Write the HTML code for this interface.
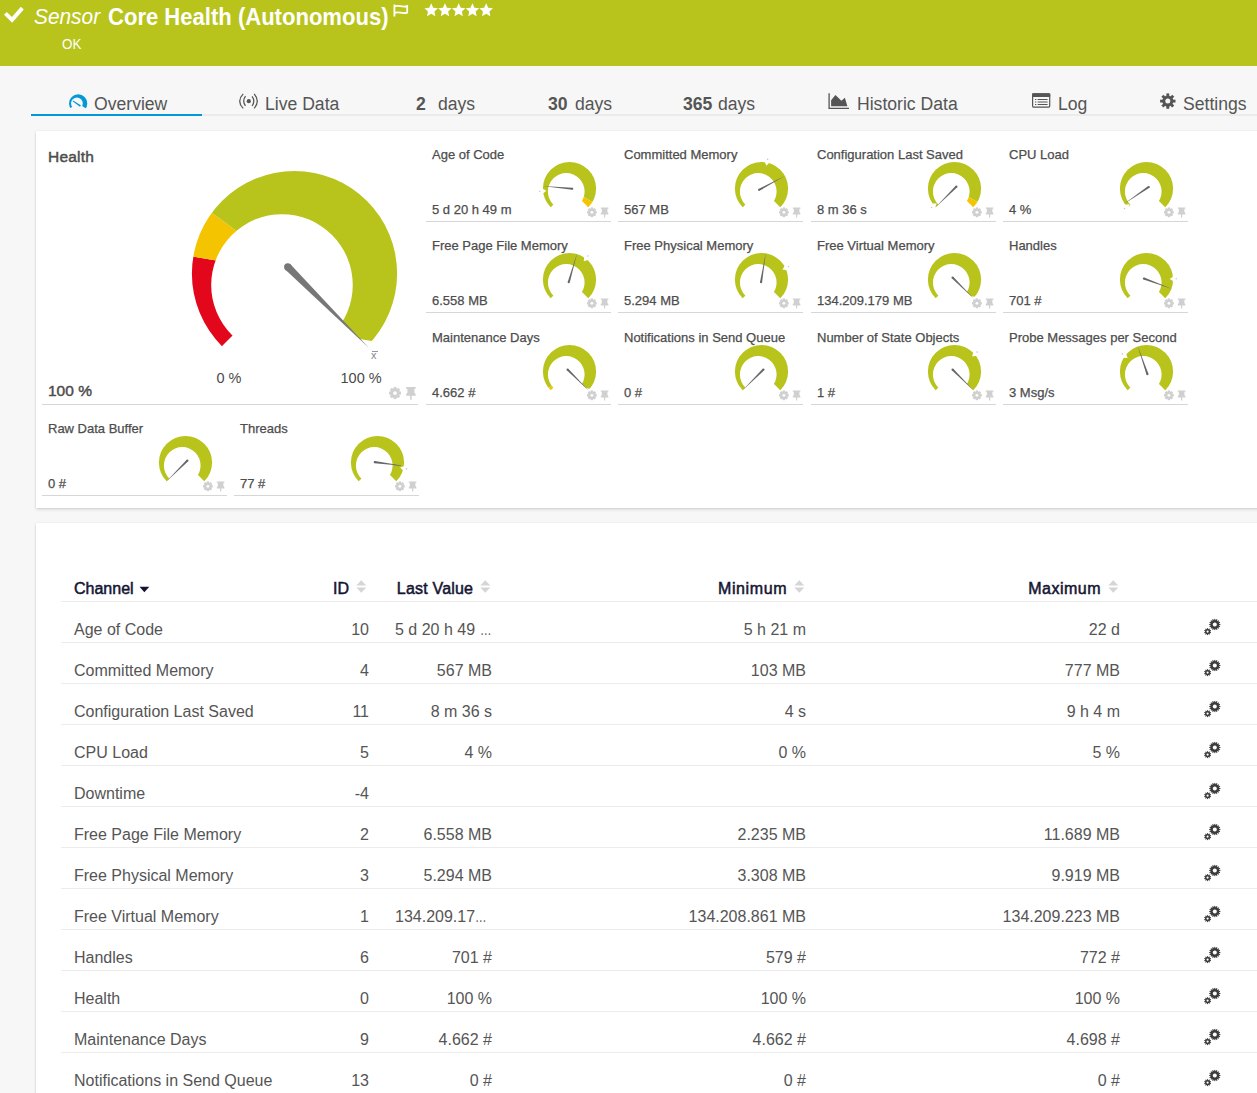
<!DOCTYPE html>
<html><head><meta charset="utf-8">
<style>
*{margin:0;padding:0;box-sizing:border-box}
html,body{width:1257px;height:1093px;overflow:hidden;background:#f7f7f7;font-family:"Liberation Sans",sans-serif;color:#555}
.a{position:absolute;white-space:nowrap;line-height:1}
#hdr{position:absolute;left:0;top:0;width:1257px;height:66px;background:#b8c41c}
.tab{position:absolute;top:95px;font-size:17.6px;line-height:18px;color:#555;white-space:nowrap}
.tab b{font-weight:bold}
.panel{position:absolute;left:36px;width:1240px;background:#fff;box-shadow:0 0 2px rgba(0,0,0,.09),0 1.5px 3px rgba(0,0,0,.13)}
.tt{position:absolute;font-size:13px;line-height:13px;color:#4d4d4d;-webkit-text-stroke:0.25px #4d4d4d;white-space:nowrap}
.tv{position:absolute;font-size:13px;line-height:13px;color:#4d4d4d;-webkit-text-stroke:0.25px #4d4d4d;white-space:nowrap}
.tl{position:absolute;height:1px;background:#d6d6d6}
.th{position:absolute;top:580.7px;font-size:16px;line-height:16px;color:#141433;-webkit-text-stroke:0.5px #141433;white-space:nowrap}
.td{position:absolute;font-size:16px;line-height:16px;color:#555;white-space:nowrap}
.rl{position:absolute;left:61px;width:1196px;height:1px;background:#ececec}
</style></head><body>
<div id="hdr"></div>
<svg class="a" style="left:0;top:0" width="520" height="60" viewBox="0 0 520 60">
 <path d="M5.4,13.3 L12.1,19.9 L22.3,8.1" fill="none" stroke="#fff" stroke-width="3.9" stroke-linecap="butt" stroke-linejoin="miter"/>
 <path d="M394.4,4.6 V16.6 M394.8,6.3 C398.5,4.4 402,8 407.2,6.1 V12.6 C402,14.5 398.5,11 394.8,12.9" fill="none" stroke="#fff" stroke-width="1.8"/>
 <g fill="#fff"><polygon points="431.2,3.3 433.2,7.65 437.95,8.21 434.43,11.45 435.37,16.14 431.2,13.8 427.03,16.14 427.97,11.45 424.45,8.21 429.2,7.65"/><polygon points="444.95,3.3 446.95,7.65 451.7,8.21 448.18,11.45 449.12,16.14 444.95,13.8 440.78,16.14 441.72,11.45 438.2,8.21 442.95,7.65"/><polygon points="458.7,3.3 460.7,7.65 465.45,8.21 461.93,11.45 462.87,16.14 458.7,13.8 454.53,16.14 455.47,11.45 451.95,8.21 456.7,7.65"/><polygon points="472.45,3.3 474.45,7.65 479.2,8.21 475.68,11.45 476.62,16.14 472.45,13.8 468.28,16.14 469.22,11.45 465.7,8.21 470.45,7.65"/><polygon points="486.2,3.3 488.2,7.65 492.95,8.21 489.43,11.45 490.37,16.14 486.2,13.8 482.03,16.14 482.97,11.45 479.45,8.21 484.2,7.65"/></g>
</svg>
<div class="a" style="left:33.6px;top:6.6px;font-size:21.5px;line-height:21.5px;font-style:italic;color:#fff;transform:scaleX(0.97);transform-origin:0 0">Sensor</div>
<div class="a" style="left:107.5px;top:5px;font-size:24.5px;line-height:24.5px;font-weight:bold;color:#fff;transform:scaleX(0.9);transform-origin:0 0">Core Health (Autonomous)</div>
<div class="a" style="left:62px;top:36.6px;font-size:14.1px;line-height:14.1px;color:#fff;transform:scaleX(0.95);transform-origin:0 0">OK</div>

<!-- tabs -->
<div class="tab" style="left:94px">Overview</div>
<div class="tab" style="left:265px">Live Data</div>
<div class="tab" style="left:416px"><b>2</b></div><div class="tab" style="left:438px">days</div>
<div class="tab" style="left:548px"><b>30</b></div><div class="tab" style="left:575px">days</div>
<div class="tab" style="left:683px"><b>365</b></div><div class="tab" style="left:718px">days</div>
<div class="tab" style="left:857px">Historic Data</div>
<div class="tab" style="left:1058px">Log</div>
<div class="tab" style="left:1183px">Settings</div>
<div class="a" style="left:31px;top:114px;width:1226px;height:2px;background:#ebebeb"></div>
<div class="a" style="left:31px;top:114px;width:171px;height:2px;background:#0399d6"></div>
<svg class="a" style="left:0;top:85px" width="1257" height="30" viewBox="0 85 1257 30">
 <!-- overview gauge icon -->
<clipPath id="ovc"><path clip-rule="evenodd" d="M69,103.4a9.15,9.15 0 1,0 18.3,0a9.15,9.15 0 1,0 -18.3,0ZM71,103.3a5.9,5.9 0 1,0 11.8,0a5.9,5.9 0 1,0 -11.8,0Z"/></clipPath><g clip-path="url(#ovc)"><polygon fill="#0399d6" points="78.15,103.4 66.03,110.4 65.47,109.33 65,108.21 64.63,107.05 64.37,105.87 64.21,104.67 64.15,103.46 64.2,102.25 64.35,101.05 64.6,99.86 64.96,98.71 65.42,97.58 65.97,96.5 66.61,95.48 67.34,94.51 68.15,93.61 69.03,92.78 69.98,92.03 71,91.37 72.06,90.79 73.17,90.31 74.32,89.93 75.5,89.65 76.7,89.48 77.91,89.4 79.12,89.43 80.33,89.57 81.51,89.81 82.67,90.15 83.8,90.59 84.89,91.13 85.92,91.76 86.9,92.47 87.81,93.27 88.65,94.14 89.41,95.09 90.09,96.09 90.68,97.15 91.17,98.26 91.57,99.4 91.86,100.58 92.06,101.77 92.14,102.98 92.13,104.19 92.01,105.4 91.78,106.59 91.46,107.75 91.03,108.89 90.51,109.98 89.89,111.02"/></g><polygon fill="#0399d6" points="72.6,101.3 73.2,100.5 80.3,105 79.3,106.3"/><circle cx="79.8" cy="105.6" r="0.85" fill="#0399d6"/>
 <!-- live data -->
 <circle cx="248.8" cy="101.2" r="2.1" fill="#555"/>
 <path d="M243.2,93.9 Q236.2,101.2 243.2,108.4 M245.5,96.2 Q241.9,101 245.5,105.9 M252.1,96.4 Q255.5,101.2 252.1,106 M254.2,94 Q260.4,101.2 254.2,108.3" fill="none" stroke="#555" stroke-width="1.25"/>
 <!-- historic -->
 <path d="M829.1,93.3 V108.3 H849" fill="none" stroke="#555" stroke-width="1.3"/>
 <path d="M831.1,106.2 V100.2 L835.4,94.9 L841.4,100.7 L844.9,97.8 L847.4,106.2 Z" fill="#555"/>
 <!-- log -->
 <rect x="1032.6" y="93.9" width="17.1" height="13.3" rx="1.3" fill="none" stroke="#555" stroke-width="1.2"/>
 <rect x="1032" y="93.3" width="18.3" height="3.6" rx="0.8" fill="#555"/>
 <path d="M1035,99.5 h1.3 M1037.6,99.5 h10 M1035,102 h1.3 M1037.6,102 h10 M1035,104.5 h1.3 M1037.6,104.5 h10" stroke="#555" stroke-width="1"/>
 <!-- settings gear -->
 <circle cx="1167.8" cy="101.1" r="5.54" fill="#555"/><rect x="1166.38" y="93.4" width="2.85" height="2.96" fill="#555" transform="rotate(0.0 1167.8 101.1)"/><rect x="1166.38" y="93.4" width="2.85" height="2.96" fill="#555" transform="rotate(45.0 1167.8 101.1)"/><rect x="1166.38" y="93.4" width="2.85" height="2.96" fill="#555" transform="rotate(90.0 1167.8 101.1)"/><rect x="1166.38" y="93.4" width="2.85" height="2.96" fill="#555" transform="rotate(135.0 1167.8 101.1)"/><rect x="1166.38" y="93.4" width="2.85" height="2.96" fill="#555" transform="rotate(180.0 1167.8 101.1)"/><rect x="1166.38" y="93.4" width="2.85" height="2.96" fill="#555" transform="rotate(225.0 1167.8 101.1)"/><rect x="1166.38" y="93.4" width="2.85" height="2.96" fill="#555" transform="rotate(270.0 1167.8 101.1)"/><rect x="1166.38" y="93.4" width="2.85" height="2.96" fill="#555" transform="rotate(315.0 1167.8 101.1)"/><circle cx="1167.8" cy="101.1" r="2.5" fill="#f7f7f7"/>
</svg>

<div class="panel" style="top:131px;height:377px"></div>
<div class="panel" style="top:523px;height:600px"></div>

<!-- Health tile -->
<div class="a" style="left:48px;top:149px;font-size:15.5px;line-height:15.5px;letter-spacing:0.2px;color:#4d4d4d;-webkit-text-stroke:0.45px #4d4d4d">Health</div>
<div class="a" style="left:48px;top:383px;font-size:15.5px;line-height:15.5px;color:#4d4d4d;-webkit-text-stroke:0.45px #4d4d4d">100 %</div>
<div class="a" style="left:216.5px;top:371px;font-size:14.5px;line-height:14.5px;color:#4a4a4a">0 %</div>
<div class="a" style="left:340.5px;top:371px;font-size:14.5px;line-height:14.5px;color:#4a4a4a">100 %</div>
<div class="a" style="left:371px;top:350px;font-size:11px;line-height:11px;color:#888">x</div>
<div class="a" style="left:371.5px;top:351px;width:6px;height:1px;background:#999"></div>
<div class="tl" style="left:42px;top:404px;width:376px"></div>
<div class="tt" style="left:432px;top:148px">Age of Code</div>
<div class="tv" style="left:432px;top:203px">5 d 20 h 49 m</div>
<div class="tl" style="left:426px;top:221px;width:185px"></div>
<div class="tt" style="left:624px;top:148px">Committed Memory</div>
<div class="tv" style="left:624px;top:203px">567 MB</div>
<div class="tl" style="left:618px;top:221px;width:185px"></div>
<div class="tt" style="left:817px;top:148px">Configuration Last Saved</div>
<div class="tv" style="left:817px;top:203px">8 m 36 s</div>
<div class="tl" style="left:811px;top:221px;width:185px"></div>
<div class="tt" style="left:1009px;top:148px">CPU Load</div>
<div class="tv" style="left:1009px;top:203px">4 %</div>
<div class="tl" style="left:1003px;top:221px;width:185px"></div>
<div class="tt" style="left:432px;top:239px">Free Page File Memory</div>
<div class="tv" style="left:432px;top:294px">6.558 MB</div>
<div class="tl" style="left:426px;top:312px;width:185px"></div>
<div class="tt" style="left:624px;top:239px">Free Physical Memory</div>
<div class="tv" style="left:624px;top:294px">5.294 MB</div>
<div class="tl" style="left:618px;top:312px;width:185px"></div>
<div class="tt" style="left:817px;top:239px">Free Virtual Memory</div>
<div class="tv" style="left:817px;top:294px">134.209.179 MB</div>
<div class="tl" style="left:811px;top:312px;width:185px"></div>
<div class="tt" style="left:1009px;top:239px">Handles</div>
<div class="tv" style="left:1009px;top:294px">701 #</div>
<div class="tl" style="left:1003px;top:312px;width:185px"></div>
<div class="tt" style="left:432px;top:331px">Maintenance Days</div>
<div class="tv" style="left:432px;top:386px">4.662 #</div>
<div class="tl" style="left:426px;top:404px;width:185px"></div>
<div class="tt" style="left:624px;top:331px">Notifications in Send Queue</div>
<div class="tv" style="left:624px;top:386px">0 #</div>
<div class="tl" style="left:618px;top:404px;width:185px"></div>
<div class="tt" style="left:817px;top:331px">Number of State Objects</div>
<div class="tv" style="left:817px;top:386px">1 #</div>
<div class="tl" style="left:811px;top:404px;width:185px"></div>
<div class="tt" style="left:1009px;top:331px">Probe Messages per Second</div>
<div class="tv" style="left:1009px;top:386px">3 Msg/s</div>
<div class="tl" style="left:1003px;top:404px;width:185px"></div>
<div class="tt" style="left:48px;top:422px">Raw Data Buffer</div>
<div class="tv" style="left:48px;top:477px">0 #</div>
<div class="tl" style="left:42px;top:495px;width:185px"></div>
<div class="tt" style="left:240px;top:422px">Threads</div>
<div class="tv" style="left:240px;top:477px">77 #</div>
<div class="tl" style="left:234px;top:495px;width:185px"></div>
<svg class="a" style="left:0;top:0" width="1257" height="520" viewBox="0 0 1257 520">
<clipPath id="r1"><path clip-rule="evenodd" d="M542.9,188.5a26.6,26.6 0 1,0 53.2,0a26.6,26.6 0 1,0 -53.2,0ZM547.9,191.45a18.35,18.35 0 1,0 36.7,0a18.35,18.35 0 1,0 -36.7,0Z"/></clipPath>
<g clip-path="url(#r1)">
<polygon fill="#b8c41c" points="569.5,188.5 539.41,218.59 536.94,215.9 534.71,213.01 532.73,209.94 531.03,206.71 529.61,203.35 528.49,199.87 527.66,196.31 527.15,192.7 526.94,189.05 527.05,185.4 527.47,181.78 528.21,178.2 529.24,174.7 530.57,171.3 532.19,168.02 534.08,164.9 536.23,161.95 538.63,159.2 541.26,156.66 544.09,154.36 547.11,152.31 550.3,150.52 553.62,149.01 557.06,147.8 560.6,146.88 564.2,146.27 567.84,145.97 571.49,145.99 575.13,146.31 578.72,146.95 582.25,147.89 585.68,149.14 589,150.67 592.17,152.48 595.17,154.55 597.99,156.88 600.59,159.44 602.97,162.21 605.1,165.18 606.97,168.31 608.56,171.6 609.87,175.01 610.87,178.52 611.58,182.1 611.97,185.73 612.05,189.38 611.82,193.03 611.27,196.64 610.42,200.19 609.27,203.65 607.83,207.01 606.1,210.22"/>
<polygon fill="#f5c400" points="569.5,188.5 606.1,210.22 604.17,213.19 601.99,215.99 599.59,218.59"/>
</g>
<polygon fill="#fff" points="546.4,190.65 542.59,193.64 542.1,188.41"/>
<circle cx="539.83" cy="191.26" r="0.8" fill="#c8c8d0"/>
<polygon fill="#666" points="572.19,189.8 542.21,186.01 572.38,187.71"/>
<circle cx="572.29" cy="188.75" r="1.05" fill="#666"/>
<circle cx="591.9" cy="212.3" r="3.92" fill="#d0d0d0"/><rect x="590.72" y="207.4" width="2.35" height="1.78" fill="#d0d0d0" transform="rotate(0.0 591.9 212.3)"/><rect x="590.72" y="207.4" width="2.35" height="1.78" fill="#d0d0d0" transform="rotate(45.0 591.9 212.3)"/><rect x="590.72" y="207.4" width="2.35" height="1.78" fill="#d0d0d0" transform="rotate(90.0 591.9 212.3)"/><rect x="590.72" y="207.4" width="2.35" height="1.78" fill="#d0d0d0" transform="rotate(135.0 591.9 212.3)"/><rect x="590.72" y="207.4" width="2.35" height="1.78" fill="#d0d0d0" transform="rotate(180.0 591.9 212.3)"/><rect x="590.72" y="207.4" width="2.35" height="1.78" fill="#d0d0d0" transform="rotate(225.0 591.9 212.3)"/><rect x="590.72" y="207.4" width="2.35" height="1.78" fill="#d0d0d0" transform="rotate(270.0 591.9 212.3)"/><rect x="590.72" y="207.4" width="2.35" height="1.78" fill="#d0d0d0" transform="rotate(315.0 591.9 212.3)"/><circle cx="591.9" cy="212.3" r="1.4" fill="#fff"/>
<path fill="#d0d0d0" transform="translate(600.8 207.4) scale(1.0)" d="M0,0h7.6v1.3h-1v3.3l1,1.2v1.2h-3.2v3.1h-1.2v-3.1h-3.2v-1.2l1,-1.2v-3.3h-1z"/>
<clipPath id="r2"><path clip-rule="evenodd" d="M734.9,188.5a26.6,26.6 0 1,0 53.2,0a26.6,26.6 0 1,0 -53.2,0ZM739.9,191.45a18.35,18.35 0 1,0 36.7,0a18.35,18.35 0 1,0 -36.7,0Z"/></clipPath>
<g clip-path="url(#r2)">
<polygon fill="#b8c41c" points="761.5,188.5 731.41,218.59 728.94,215.91 726.71,213.02 724.74,209.96 723.04,206.73 721.62,203.37 720.5,199.91 719.67,196.36 719.15,192.75 718.94,189.11 719.05,185.46 719.46,181.84 720.19,178.27 721.21,174.77 722.54,171.37 724.15,168.1 726.03,164.98 728.17,162.03 730.56,159.28 733.17,156.74 735.99,154.43 739,152.37 742.18,150.58 745.49,149.06 748.93,147.84 752.45,146.91 756.05,146.29 759.68,145.98 763.32,145.98 766.95,146.29 770.55,146.91 774.07,147.84 777.51,149.06 780.82,150.58 784,152.37 787.01,154.43 789.83,156.74 792.44,159.28 794.83,162.03 796.97,164.98 798.85,168.1 800.46,171.37 801.79,174.77 802.81,178.27 803.54,181.84 803.95,185.46 804.06,189.11 803.85,192.75 803.33,196.36 802.5,199.91 801.38,203.37 799.96,206.73 798.26,209.96 796.29,213.02 794.06,215.91 791.59,218.59"/>
</g>
<polygon fill="#fff" points="766.28,165.8 764.54,161.27 769.68,162.35"/>
<circle cx="767.63" cy="159.34" r="0.8" fill="#c8c8d0"/>
<polygon fill="#666" points="758.54,188.91 785.59,175.45 759.54,190.76"/>
<circle cx="759.04" cy="189.83" r="1.05" fill="#666"/>
<circle cx="783.9" cy="212.3" r="3.92" fill="#d0d0d0"/><rect x="782.72" y="207.4" width="2.35" height="1.78" fill="#d0d0d0" transform="rotate(0.0 783.9 212.3)"/><rect x="782.72" y="207.4" width="2.35" height="1.78" fill="#d0d0d0" transform="rotate(45.0 783.9 212.3)"/><rect x="782.72" y="207.4" width="2.35" height="1.78" fill="#d0d0d0" transform="rotate(90.0 783.9 212.3)"/><rect x="782.72" y="207.4" width="2.35" height="1.78" fill="#d0d0d0" transform="rotate(135.0 783.9 212.3)"/><rect x="782.72" y="207.4" width="2.35" height="1.78" fill="#d0d0d0" transform="rotate(180.0 783.9 212.3)"/><rect x="782.72" y="207.4" width="2.35" height="1.78" fill="#d0d0d0" transform="rotate(225.0 783.9 212.3)"/><rect x="782.72" y="207.4" width="2.35" height="1.78" fill="#d0d0d0" transform="rotate(270.0 783.9 212.3)"/><rect x="782.72" y="207.4" width="2.35" height="1.78" fill="#d0d0d0" transform="rotate(315.0 783.9 212.3)"/><circle cx="783.9" cy="212.3" r="1.4" fill="#fff"/>
<path fill="#d0d0d0" transform="translate(792.8 207.4) scale(1.0)" d="M0,0h7.6v1.3h-1v3.3l1,1.2v1.2h-3.2v3.1h-1.2v-3.1h-3.2v-1.2l1,-1.2v-3.3h-1z"/>
<clipPath id="r3"><path clip-rule="evenodd" d="M927.9,188.5a26.6,26.6 0 1,0 53.2,0a26.6,26.6 0 1,0 -53.2,0ZM932.9,191.45a18.35,18.35 0 1,0 36.7,0a18.35,18.35 0 1,0 -36.7,0Z"/></clipPath>
<g clip-path="url(#r3)">
<polygon fill="#b8c41c" points="954.5,188.5 924.41,218.59 921.94,215.9 919.71,213.01 917.73,209.94 916.03,206.71 914.61,203.35 913.49,199.87 912.66,196.31 912.15,192.7 911.94,189.05 912.05,185.4 912.47,181.78 913.21,178.2 914.24,174.7 915.57,171.3 917.19,168.02 919.08,164.9 921.23,161.95 923.63,159.2 926.26,156.66 929.09,154.36 932.11,152.31 935.3,150.52 938.62,149.01 942.06,147.8 945.6,146.88 949.2,146.27 952.84,145.97 956.49,145.99 960.13,146.31 963.72,146.95 967.25,147.89 970.68,149.14 974,150.67 977.17,152.48 980.17,154.55 982.99,156.88 985.59,159.44 987.97,162.21 990.1,165.18 991.97,168.31 993.56,171.6 994.87,175.01 995.87,178.52 996.58,182.1 996.97,185.73 997.05,189.38 996.82,193.03 996.27,196.64 995.42,200.19 994.27,203.65 992.83,207.01 991.1,210.22"/>
<polygon fill="#f5c400" points="954.5,188.5 991.1,210.22 989.17,213.19 986.99,215.99 984.59,218.59"/>
</g>
<polygon fill="#fff" points="936.62,203.29 935.16,207.91 931.81,203.86"/>
<circle cx="931.54" cy="207.5" r="0.8" fill="#c8c8d0"/>
<polygon fill="#666" points="957.22,187.26 935.13,207.87 955.74,185.78"/>
<circle cx="956.48" cy="186.52" r="1.05" fill="#666"/>
<circle cx="976.9" cy="212.3" r="3.92" fill="#d0d0d0"/><rect x="975.72" y="207.4" width="2.35" height="1.78" fill="#d0d0d0" transform="rotate(0.0 976.9 212.3)"/><rect x="975.72" y="207.4" width="2.35" height="1.78" fill="#d0d0d0" transform="rotate(45.0 976.9 212.3)"/><rect x="975.72" y="207.4" width="2.35" height="1.78" fill="#d0d0d0" transform="rotate(90.0 976.9 212.3)"/><rect x="975.72" y="207.4" width="2.35" height="1.78" fill="#d0d0d0" transform="rotate(135.0 976.9 212.3)"/><rect x="975.72" y="207.4" width="2.35" height="1.78" fill="#d0d0d0" transform="rotate(180.0 976.9 212.3)"/><rect x="975.72" y="207.4" width="2.35" height="1.78" fill="#d0d0d0" transform="rotate(225.0 976.9 212.3)"/><rect x="975.72" y="207.4" width="2.35" height="1.78" fill="#d0d0d0" transform="rotate(270.0 976.9 212.3)"/><rect x="975.72" y="207.4" width="2.35" height="1.78" fill="#d0d0d0" transform="rotate(315.0 976.9 212.3)"/><circle cx="976.9" cy="212.3" r="1.4" fill="#fff"/>
<path fill="#d0d0d0" transform="translate(985.8 207.4) scale(1.0)" d="M0,0h7.6v1.3h-1v3.3l1,1.2v1.2h-3.2v3.1h-1.2v-3.1h-3.2v-1.2l1,-1.2v-3.3h-1z"/>
<clipPath id="r4"><path clip-rule="evenodd" d="M1119.9,188.5a26.6,26.6 0 1,0 53.2,0a26.6,26.6 0 1,0 -53.2,0ZM1124.9,191.45a18.35,18.35 0 1,0 36.7,0a18.35,18.35 0 1,0 -36.7,0Z"/></clipPath>
<g clip-path="url(#r4)">
<polygon fill="#b8c41c" points="1146.5,188.5 1116.41,218.59 1113.94,215.91 1111.71,213.02 1109.74,209.96 1108.04,206.73 1106.62,203.37 1105.5,199.91 1104.67,196.36 1104.15,192.75 1103.94,189.11 1104.05,185.46 1104.46,181.84 1105.19,178.27 1106.21,174.77 1107.54,171.37 1109.15,168.1 1111.03,164.98 1113.17,162.03 1115.56,159.28 1118.17,156.74 1120.99,154.43 1124,152.37 1127.18,150.58 1130.49,149.06 1133.93,147.84 1137.45,146.91 1141.05,146.29 1144.68,145.98 1148.32,145.98 1151.95,146.29 1155.55,146.91 1159.07,147.84 1162.51,149.06 1165.82,150.58 1169,152.37 1172.01,154.43 1174.83,156.74 1177.44,159.28 1179.83,162.03 1181.97,164.98 1183.85,168.1 1185.46,171.37 1186.79,174.77 1187.81,178.27 1188.54,181.84 1188.95,185.46 1189.06,189.11 1188.85,192.75 1188.33,196.36 1187.5,199.91 1186.38,203.37 1184.96,206.73 1183.26,209.96 1181.29,213.02 1179.06,215.91 1176.59,218.59"/>
</g>
<polygon fill="#fff" points="1129.34,204.11 1128.09,208.8 1124.56,204.91"/>
<circle cx="1124.46" cy="208.56" r="0.8" fill="#c8c8d0"/>
<polygon fill="#666" points="1149.41,187.79 1123.84,203.9 1148.23,186.06"/>
<circle cx="1148.82" cy="186.93" r="1.05" fill="#666"/>
<circle cx="1168.9" cy="212.3" r="3.92" fill="#d0d0d0"/><rect x="1167.72" y="207.4" width="2.35" height="1.78" fill="#d0d0d0" transform="rotate(0.0 1168.9 212.3)"/><rect x="1167.72" y="207.4" width="2.35" height="1.78" fill="#d0d0d0" transform="rotate(45.0 1168.9 212.3)"/><rect x="1167.72" y="207.4" width="2.35" height="1.78" fill="#d0d0d0" transform="rotate(90.0 1168.9 212.3)"/><rect x="1167.72" y="207.4" width="2.35" height="1.78" fill="#d0d0d0" transform="rotate(135.0 1168.9 212.3)"/><rect x="1167.72" y="207.4" width="2.35" height="1.78" fill="#d0d0d0" transform="rotate(180.0 1168.9 212.3)"/><rect x="1167.72" y="207.4" width="2.35" height="1.78" fill="#d0d0d0" transform="rotate(225.0 1168.9 212.3)"/><rect x="1167.72" y="207.4" width="2.35" height="1.78" fill="#d0d0d0" transform="rotate(270.0 1168.9 212.3)"/><rect x="1167.72" y="207.4" width="2.35" height="1.78" fill="#d0d0d0" transform="rotate(315.0 1168.9 212.3)"/><circle cx="1168.9" cy="212.3" r="1.4" fill="#fff"/>
<path fill="#d0d0d0" transform="translate(1177.8 207.4) scale(1.0)" d="M0,0h7.6v1.3h-1v3.3l1,1.2v1.2h-3.2v3.1h-1.2v-3.1h-3.2v-1.2l1,-1.2v-3.3h-1z"/>
<clipPath id="r5"><path clip-rule="evenodd" d="M542.9,279.5a26.6,26.6 0 1,0 53.2,0a26.6,26.6 0 1,0 -53.2,0ZM547.9,282.45a18.35,18.35 0 1,0 36.7,0a18.35,18.35 0 1,0 -36.7,0Z"/></clipPath>
<g clip-path="url(#r5)">
<polygon fill="#b8c41c" points="569.5,279.5 539.41,309.59 536.94,306.91 534.71,304.02 532.74,300.96 531.04,297.73 529.62,294.37 528.5,290.91 527.67,287.36 527.15,283.75 526.94,280.11 527.05,276.46 527.46,272.84 528.19,269.27 529.21,265.77 530.54,262.37 532.15,259.1 534.03,255.98 536.17,253.03 538.56,250.28 541.17,247.74 543.99,245.43 547,243.37 550.18,241.58 553.49,240.06 556.93,238.84 560.45,237.91 564.05,237.29 567.68,236.98 571.32,236.98 574.95,237.29 578.55,237.91 582.07,238.84 585.51,240.06 588.82,241.58 592,243.37 595.01,245.43 597.83,247.74 600.44,250.28 602.83,253.03 604.97,255.98 606.85,259.1 608.46,262.37 609.79,265.77 610.81,269.27 611.54,272.84 611.95,276.46 612.06,280.11 611.85,283.75 611.33,287.36 610.5,290.91 609.38,294.37 607.96,297.73 606.26,300.96 604.29,304.02 602.06,306.91 599.59,309.59"/>
</g>
<polygon fill="#fff" points="583.81,261.24 584.25,256.41 588.39,259.65"/>
<circle cx="587.88" cy="256.04" r="0.8" fill="#c8c8d0"/>
<polygon fill="#666" points="567.71,281.9 577.14,253.19 569.73,282.48"/>
<circle cx="568.72" cy="282.19" r="1.05" fill="#666"/>
<circle cx="591.9" cy="303.3" r="3.92" fill="#d0d0d0"/><rect x="590.72" y="298.4" width="2.35" height="1.78" fill="#d0d0d0" transform="rotate(0.0 591.9 303.3)"/><rect x="590.72" y="298.4" width="2.35" height="1.78" fill="#d0d0d0" transform="rotate(45.0 591.9 303.3)"/><rect x="590.72" y="298.4" width="2.35" height="1.78" fill="#d0d0d0" transform="rotate(90.0 591.9 303.3)"/><rect x="590.72" y="298.4" width="2.35" height="1.78" fill="#d0d0d0" transform="rotate(135.0 591.9 303.3)"/><rect x="590.72" y="298.4" width="2.35" height="1.78" fill="#d0d0d0" transform="rotate(180.0 591.9 303.3)"/><rect x="590.72" y="298.4" width="2.35" height="1.78" fill="#d0d0d0" transform="rotate(225.0 591.9 303.3)"/><rect x="590.72" y="298.4" width="2.35" height="1.78" fill="#d0d0d0" transform="rotate(270.0 591.9 303.3)"/><rect x="590.72" y="298.4" width="2.35" height="1.78" fill="#d0d0d0" transform="rotate(315.0 591.9 303.3)"/><circle cx="591.9" cy="303.3" r="1.4" fill="#fff"/>
<path fill="#d0d0d0" transform="translate(600.8 298.4) scale(1.0)" d="M0,0h7.6v1.3h-1v3.3l1,1.2v1.2h-3.2v3.1h-1.2v-3.1h-3.2v-1.2l1,-1.2v-3.3h-1z"/>
<clipPath id="r6"><path clip-rule="evenodd" d="M734.9,279.5a26.6,26.6 0 1,0 53.2,0a26.6,26.6 0 1,0 -53.2,0ZM739.9,282.45a18.35,18.35 0 1,0 36.7,0a18.35,18.35 0 1,0 -36.7,0Z"/></clipPath>
<g clip-path="url(#r6)">
<polygon fill="#b8c41c" points="761.5,279.5 731.41,309.59 728.94,306.91 726.71,304.02 724.74,300.96 723.04,297.73 721.62,294.37 720.5,290.91 719.67,287.36 719.15,283.75 718.94,280.11 719.05,276.46 719.46,272.84 720.19,269.27 721.21,265.77 722.54,262.37 724.15,259.1 726.03,255.98 728.17,253.03 730.56,250.28 733.17,247.74 735.99,245.43 739,243.37 742.18,241.58 745.49,240.06 748.93,238.84 752.45,237.91 756.05,237.29 759.68,236.98 763.32,236.98 766.95,237.29 770.55,237.91 774.07,238.84 777.51,240.06 780.82,241.58 784,243.37 787.01,245.43 789.83,247.74 792.44,250.28 794.83,253.03 796.97,255.98 798.85,259.1 800.46,262.37 801.79,265.77 802.81,269.27 803.54,272.84 803.95,276.46 804.06,280.11 803.85,283.75 803.33,287.36 802.5,290.91 801.38,294.37 799.96,297.73 798.26,300.96 796.29,304.02 794.06,306.91 791.59,309.59"/>
</g>
<polygon fill="#fff" points="782.45,269.52 784.99,265.4 787.25,270.14"/>
<circle cx="788.4" cy="266.68" r="0.8" fill="#c8c8d0"/>
<polygon fill="#666" points="760.02,282.1 765.87,252.45 762.09,282.43"/>
<circle cx="761.05" cy="282.26" r="1.05" fill="#666"/>
<circle cx="783.9" cy="303.3" r="3.92" fill="#d0d0d0"/><rect x="782.72" y="298.4" width="2.35" height="1.78" fill="#d0d0d0" transform="rotate(0.0 783.9 303.3)"/><rect x="782.72" y="298.4" width="2.35" height="1.78" fill="#d0d0d0" transform="rotate(45.0 783.9 303.3)"/><rect x="782.72" y="298.4" width="2.35" height="1.78" fill="#d0d0d0" transform="rotate(90.0 783.9 303.3)"/><rect x="782.72" y="298.4" width="2.35" height="1.78" fill="#d0d0d0" transform="rotate(135.0 783.9 303.3)"/><rect x="782.72" y="298.4" width="2.35" height="1.78" fill="#d0d0d0" transform="rotate(180.0 783.9 303.3)"/><rect x="782.72" y="298.4" width="2.35" height="1.78" fill="#d0d0d0" transform="rotate(225.0 783.9 303.3)"/><rect x="782.72" y="298.4" width="2.35" height="1.78" fill="#d0d0d0" transform="rotate(270.0 783.9 303.3)"/><rect x="782.72" y="298.4" width="2.35" height="1.78" fill="#d0d0d0" transform="rotate(315.0 783.9 303.3)"/><circle cx="783.9" cy="303.3" r="1.4" fill="#fff"/>
<path fill="#d0d0d0" transform="translate(792.8 298.4) scale(1.0)" d="M0,0h7.6v1.3h-1v3.3l1,1.2v1.2h-3.2v3.1h-1.2v-3.1h-3.2v-1.2l1,-1.2v-3.3h-1z"/>
<clipPath id="r7"><path clip-rule="evenodd" d="M927.9,279.5a26.6,26.6 0 1,0 53.2,0a26.6,26.6 0 1,0 -53.2,0ZM932.9,282.45a18.35,18.35 0 1,0 36.7,0a18.35,18.35 0 1,0 -36.7,0Z"/></clipPath>
<g clip-path="url(#r7)">
<polygon fill="#b8c41c" points="954.5,279.5 924.41,309.59 921.94,306.91 919.71,304.02 917.74,300.96 916.04,297.73 914.62,294.37 913.5,290.91 912.67,287.36 912.15,283.75 911.94,280.11 912.05,276.46 912.46,272.84 913.19,269.27 914.21,265.77 915.54,262.37 917.15,259.1 919.03,255.98 921.17,253.03 923.56,250.28 926.17,247.74 928.99,245.43 932,243.37 935.18,241.58 938.49,240.06 941.93,238.84 945.45,237.91 949.05,237.29 952.68,236.98 956.32,236.98 959.95,237.29 963.55,237.91 967.07,238.84 970.51,240.06 973.82,241.58 977,243.37 980.01,245.43 982.83,247.74 985.44,250.28 987.83,253.03 989.97,255.98 991.85,259.1 993.46,262.37 994.79,265.77 995.81,269.27 996.54,272.84 996.95,276.46 997.06,280.11 996.85,283.75 996.33,287.36 995.5,290.91 994.38,294.37 992.96,297.73 991.26,300.96 989.29,304.02 987.06,306.91 984.59,309.59"/>
</g>
<polygon fill="#fff" points="970.9,295.9 975.64,296.93 971.93,300.64"/>
<circle cx="975.57" cy="300.57" r="0.8" fill="#c8c8d0"/>
<polygon fill="#666" points="953.26,276.78 973.87,298.87 951.78,278.26"/>
<circle cx="952.52" cy="277.52" r="1.05" fill="#666"/>
<circle cx="976.9" cy="303.3" r="3.92" fill="#d0d0d0"/><rect x="975.72" y="298.4" width="2.35" height="1.78" fill="#d0d0d0" transform="rotate(0.0 976.9 303.3)"/><rect x="975.72" y="298.4" width="2.35" height="1.78" fill="#d0d0d0" transform="rotate(45.0 976.9 303.3)"/><rect x="975.72" y="298.4" width="2.35" height="1.78" fill="#d0d0d0" transform="rotate(90.0 976.9 303.3)"/><rect x="975.72" y="298.4" width="2.35" height="1.78" fill="#d0d0d0" transform="rotate(135.0 976.9 303.3)"/><rect x="975.72" y="298.4" width="2.35" height="1.78" fill="#d0d0d0" transform="rotate(180.0 976.9 303.3)"/><rect x="975.72" y="298.4" width="2.35" height="1.78" fill="#d0d0d0" transform="rotate(225.0 976.9 303.3)"/><rect x="975.72" y="298.4" width="2.35" height="1.78" fill="#d0d0d0" transform="rotate(270.0 976.9 303.3)"/><rect x="975.72" y="298.4" width="2.35" height="1.78" fill="#d0d0d0" transform="rotate(315.0 976.9 303.3)"/><circle cx="976.9" cy="303.3" r="1.4" fill="#fff"/>
<path fill="#d0d0d0" transform="translate(985.8 298.4) scale(1.0)" d="M0,0h7.6v1.3h-1v3.3l1,1.2v1.2h-3.2v3.1h-1.2v-3.1h-3.2v-1.2l1,-1.2v-3.3h-1z"/>
<clipPath id="r8"><path clip-rule="evenodd" d="M1119.9,279.5a26.6,26.6 0 1,0 53.2,0a26.6,26.6 0 1,0 -53.2,0ZM1124.9,282.45a18.35,18.35 0 1,0 36.7,0a18.35,18.35 0 1,0 -36.7,0Z"/></clipPath>
<g clip-path="url(#r8)">
<polygon fill="#b8c41c" points="1146.5,279.5 1116.41,309.59 1113.94,306.91 1111.71,304.02 1109.74,300.96 1108.04,297.73 1106.62,294.37 1105.5,290.91 1104.67,287.36 1104.15,283.75 1103.94,280.11 1104.05,276.46 1104.46,272.84 1105.19,269.27 1106.21,265.77 1107.54,262.37 1109.15,259.1 1111.03,255.98 1113.17,253.03 1115.56,250.28 1118.17,247.74 1120.99,245.43 1124,243.37 1127.18,241.58 1130.49,240.06 1133.93,238.84 1137.45,237.91 1141.05,237.29 1144.68,236.98 1148.32,236.98 1151.95,237.29 1155.55,237.91 1159.07,238.84 1162.51,240.06 1165.82,241.58 1169,243.37 1172.01,245.43 1174.83,247.74 1177.44,250.28 1179.83,253.03 1181.97,255.98 1183.85,259.1 1185.46,262.37 1186.79,265.77 1187.81,269.27 1188.54,272.84 1188.95,276.46 1189.06,280.11 1188.85,283.75 1188.33,287.36 1187.5,290.91 1186.38,294.37 1184.96,297.73 1183.26,300.96 1181.29,304.02 1179.06,306.91 1176.59,309.59"/>
</g>
<polygon fill="#fff" points="1169.69,278.92 1173.7,276.19 1173.83,281.44"/>
<circle cx="1176.29" cy="278.75" r="0.8" fill="#c8c8d0"/>
<polygon fill="#666" points="1144.23,277.55 1172.22,288.94 1143.51,279.52"/>
<circle cx="1143.87" cy="278.53" r="1.05" fill="#666"/>
<circle cx="1168.9" cy="303.3" r="3.92" fill="#d0d0d0"/><rect x="1167.72" y="298.4" width="2.35" height="1.78" fill="#d0d0d0" transform="rotate(0.0 1168.9 303.3)"/><rect x="1167.72" y="298.4" width="2.35" height="1.78" fill="#d0d0d0" transform="rotate(45.0 1168.9 303.3)"/><rect x="1167.72" y="298.4" width="2.35" height="1.78" fill="#d0d0d0" transform="rotate(90.0 1168.9 303.3)"/><rect x="1167.72" y="298.4" width="2.35" height="1.78" fill="#d0d0d0" transform="rotate(135.0 1168.9 303.3)"/><rect x="1167.72" y="298.4" width="2.35" height="1.78" fill="#d0d0d0" transform="rotate(180.0 1168.9 303.3)"/><rect x="1167.72" y="298.4" width="2.35" height="1.78" fill="#d0d0d0" transform="rotate(225.0 1168.9 303.3)"/><rect x="1167.72" y="298.4" width="2.35" height="1.78" fill="#d0d0d0" transform="rotate(270.0 1168.9 303.3)"/><rect x="1167.72" y="298.4" width="2.35" height="1.78" fill="#d0d0d0" transform="rotate(315.0 1168.9 303.3)"/><circle cx="1168.9" cy="303.3" r="1.4" fill="#fff"/>
<path fill="#d0d0d0" transform="translate(1177.8 298.4) scale(1.0)" d="M0,0h7.6v1.3h-1v3.3l1,1.2v1.2h-3.2v3.1h-1.2v-3.1h-3.2v-1.2l1,-1.2v-3.3h-1z"/>
<clipPath id="r9"><path clip-rule="evenodd" d="M542.9,371.5a26.6,26.6 0 1,0 53.2,0a26.6,26.6 0 1,0 -53.2,0ZM547.9,374.45a18.35,18.35 0 1,0 36.7,0a18.35,18.35 0 1,0 -36.7,0Z"/></clipPath>
<g clip-path="url(#r9)">
<polygon fill="#f5c400" points="569.5,371.5 539.41,401.59 537.69,399.77 536.08,397.85"/>
<polygon fill="#b8c41c" points="569.5,371.5 536.08,397.85 533.92,394.86 532.03,391.69 530.43,388.37 529.11,384.92 528.1,381.37 527.4,377.75 527.02,374.08 526.95,370.4 527.21,366.72 527.78,363.07 528.67,359.49 529.86,356 531.35,352.63 533.13,349.4 535.18,346.33 537.49,343.45 540.04,340.79 542.81,338.35 545.78,336.17 548.92,334.24 552.23,332.6 555.66,331.25 559.2,330.21 562.81,329.47 566.48,329.05 570.16,328.95 573.84,329.16 577.49,329.7 581.08,330.55 584.59,331.7 587.97,333.16 591.22,334.9 594.31,336.92 597.21,339.2 599.91,341.72 602.37,344.46 604.59,347.41 606.54,350.54 608.22,353.83 609.6,357.24 610.68,360.77 611.46,364.38 611.92,368.04 612.06,371.72 611.88,375.4 611.38,379.06 610.57,382.66 609.45,386.17 608.03,389.58 606.32,392.84 604.33,395.95 602.09,398.88 599.59,401.59"/>
</g>
<polygon fill="#fff" points="585.9,387.9 590.64,388.93 586.93,392.64"/>
<circle cx="590.57" cy="392.57" r="0.8" fill="#c8c8d0"/>
<polygon fill="#666" points="568.26,368.78 588.87,390.87 566.78,370.26"/>
<circle cx="567.52" cy="369.52" r="1.05" fill="#666"/>
<circle cx="591.9" cy="395.3" r="3.92" fill="#d0d0d0"/><rect x="590.72" y="390.4" width="2.35" height="1.78" fill="#d0d0d0" transform="rotate(0.0 591.9 395.3)"/><rect x="590.72" y="390.4" width="2.35" height="1.78" fill="#d0d0d0" transform="rotate(45.0 591.9 395.3)"/><rect x="590.72" y="390.4" width="2.35" height="1.78" fill="#d0d0d0" transform="rotate(90.0 591.9 395.3)"/><rect x="590.72" y="390.4" width="2.35" height="1.78" fill="#d0d0d0" transform="rotate(135.0 591.9 395.3)"/><rect x="590.72" y="390.4" width="2.35" height="1.78" fill="#d0d0d0" transform="rotate(180.0 591.9 395.3)"/><rect x="590.72" y="390.4" width="2.35" height="1.78" fill="#d0d0d0" transform="rotate(225.0 591.9 395.3)"/><rect x="590.72" y="390.4" width="2.35" height="1.78" fill="#d0d0d0" transform="rotate(270.0 591.9 395.3)"/><rect x="590.72" y="390.4" width="2.35" height="1.78" fill="#d0d0d0" transform="rotate(315.0 591.9 395.3)"/><circle cx="591.9" cy="395.3" r="1.4" fill="#fff"/>
<path fill="#d0d0d0" transform="translate(600.8 390.4) scale(1.0)" d="M0,0h7.6v1.3h-1v3.3l1,1.2v1.2h-3.2v3.1h-1.2v-3.1h-3.2v-1.2l1,-1.2v-3.3h-1z"/>
<clipPath id="r10"><path clip-rule="evenodd" d="M734.9,371.5a26.6,26.6 0 1,0 53.2,0a26.6,26.6 0 1,0 -53.2,0ZM739.9,374.45a18.35,18.35 0 1,0 36.7,0a18.35,18.35 0 1,0 -36.7,0Z"/></clipPath>
<g clip-path="url(#r10)">
<polygon fill="#b8c41c" points="761.5,371.5 731.41,401.59 728.94,398.91 726.71,396.02 724.74,392.96 723.04,389.73 721.62,386.37 720.5,382.91 719.67,379.36 719.15,375.75 718.94,372.11 719.05,368.46 719.46,364.84 720.19,361.27 721.21,357.77 722.54,354.37 724.15,351.1 726.03,347.98 728.17,345.03 730.56,342.28 733.17,339.74 735.99,337.43 739,335.37 742.18,333.58 745.49,332.06 748.93,330.84 752.45,329.91 756.05,329.29 759.68,328.98 763.32,328.98 766.95,329.29 770.55,329.91 774.07,330.84 777.51,332.06 780.82,333.58 784,335.37 787.01,337.43 789.83,339.74 792.44,342.28 794.83,345.03 796.97,347.98 798.85,351.1 800.46,354.37 801.79,357.77 802.81,361.27 803.54,364.84 803.95,368.46 804.06,372.11 803.85,375.75 803.33,379.36 802.5,382.91 801.38,386.37 799.96,389.73 798.26,392.96 796.29,396.02 794.06,398.91 791.59,401.59"/>
</g>
<polygon fill="#666" points="764.22,370.26 742.13,390.87 762.74,368.78"/>
<circle cx="763.48" cy="369.52" r="1.05" fill="#666"/>
<circle cx="783.9" cy="395.3" r="3.92" fill="#d0d0d0"/><rect x="782.72" y="390.4" width="2.35" height="1.78" fill="#d0d0d0" transform="rotate(0.0 783.9 395.3)"/><rect x="782.72" y="390.4" width="2.35" height="1.78" fill="#d0d0d0" transform="rotate(45.0 783.9 395.3)"/><rect x="782.72" y="390.4" width="2.35" height="1.78" fill="#d0d0d0" transform="rotate(90.0 783.9 395.3)"/><rect x="782.72" y="390.4" width="2.35" height="1.78" fill="#d0d0d0" transform="rotate(135.0 783.9 395.3)"/><rect x="782.72" y="390.4" width="2.35" height="1.78" fill="#d0d0d0" transform="rotate(180.0 783.9 395.3)"/><rect x="782.72" y="390.4" width="2.35" height="1.78" fill="#d0d0d0" transform="rotate(225.0 783.9 395.3)"/><rect x="782.72" y="390.4" width="2.35" height="1.78" fill="#d0d0d0" transform="rotate(270.0 783.9 395.3)"/><rect x="782.72" y="390.4" width="2.35" height="1.78" fill="#d0d0d0" transform="rotate(315.0 783.9 395.3)"/><circle cx="783.9" cy="395.3" r="1.4" fill="#fff"/>
<path fill="#d0d0d0" transform="translate(792.8 390.4) scale(1.0)" d="M0,0h7.6v1.3h-1v3.3l1,1.2v1.2h-3.2v3.1h-1.2v-3.1h-3.2v-1.2l1,-1.2v-3.3h-1z"/>
<clipPath id="r11"><path clip-rule="evenodd" d="M927.9,371.5a26.6,26.6 0 1,0 53.2,0a26.6,26.6 0 1,0 -53.2,0ZM932.9,374.45a18.35,18.35 0 1,0 36.7,0a18.35,18.35 0 1,0 -36.7,0Z"/></clipPath>
<g clip-path="url(#r11)">
<polygon fill="#b8c41c" points="954.5,371.5 924.41,401.59 921.94,398.91 919.71,396.02 917.74,392.96 916.04,389.73 914.62,386.37 913.5,382.91 912.67,379.36 912.15,375.75 911.94,372.11 912.05,368.46 912.46,364.84 913.19,361.27 914.21,357.77 915.54,354.37 917.15,351.1 919.03,347.98 921.17,345.03 923.56,342.28 926.17,339.74 928.99,337.43 932,335.37 935.18,333.58 938.49,332.06 941.93,330.84 945.45,329.91 949.05,329.29 952.68,328.98 956.32,328.98 959.95,329.29 963.55,329.91 967.07,330.84 970.51,332.06 973.82,333.58 977,335.37 980.01,337.43 982.83,339.74 985.44,342.28 987.83,345.03 989.97,347.98 991.85,351.1 993.46,354.37 994.79,357.77 995.81,361.27 996.54,364.84 996.95,368.46 997.06,372.11 996.85,375.75 996.33,379.36 995.5,382.91 994.38,386.37 992.96,389.73 991.26,392.96 989.29,396.02 987.06,398.91 984.59,401.59"/>
</g>
<polygon fill="#fff" points="972.12,356.41 973.5,351.76 976.92,355.75"/>
<circle cx="977.13" cy="352.11" r="0.8" fill="#c8c8d0"/>
<polygon fill="#666" points="953.26,368.78 973.87,390.87 951.78,370.26"/>
<circle cx="952.52" cy="369.52" r="1.05" fill="#666"/>
<circle cx="976.9" cy="395.3" r="3.92" fill="#d0d0d0"/><rect x="975.72" y="390.4" width="2.35" height="1.78" fill="#d0d0d0" transform="rotate(0.0 976.9 395.3)"/><rect x="975.72" y="390.4" width="2.35" height="1.78" fill="#d0d0d0" transform="rotate(45.0 976.9 395.3)"/><rect x="975.72" y="390.4" width="2.35" height="1.78" fill="#d0d0d0" transform="rotate(90.0 976.9 395.3)"/><rect x="975.72" y="390.4" width="2.35" height="1.78" fill="#d0d0d0" transform="rotate(135.0 976.9 395.3)"/><rect x="975.72" y="390.4" width="2.35" height="1.78" fill="#d0d0d0" transform="rotate(180.0 976.9 395.3)"/><rect x="975.72" y="390.4" width="2.35" height="1.78" fill="#d0d0d0" transform="rotate(225.0 976.9 395.3)"/><rect x="975.72" y="390.4" width="2.35" height="1.78" fill="#d0d0d0" transform="rotate(270.0 976.9 395.3)"/><rect x="975.72" y="390.4" width="2.35" height="1.78" fill="#d0d0d0" transform="rotate(315.0 976.9 395.3)"/><circle cx="976.9" cy="395.3" r="1.4" fill="#fff"/>
<path fill="#d0d0d0" transform="translate(985.8 390.4) scale(1.0)" d="M0,0h7.6v1.3h-1v3.3l1,1.2v1.2h-3.2v3.1h-1.2v-3.1h-3.2v-1.2l1,-1.2v-3.3h-1z"/>
<clipPath id="r12"><path clip-rule="evenodd" d="M1119.9,371.5a26.6,26.6 0 1,0 53.2,0a26.6,26.6 0 1,0 -53.2,0ZM1124.9,374.45a18.35,18.35 0 1,0 36.7,0a18.35,18.35 0 1,0 -36.7,0Z"/></clipPath>
<g clip-path="url(#r12)">
<polygon fill="#b8c41c" points="1146.5,371.5 1116.41,401.59 1113.94,398.91 1111.71,396.02 1109.74,392.96 1108.04,389.73 1106.62,386.37 1105.5,382.91 1104.67,379.36 1104.15,375.75 1103.94,372.11 1104.05,368.46 1104.46,364.84 1105.19,361.27 1106.21,357.77 1107.54,354.37 1109.15,351.1 1111.03,347.98 1113.17,345.03 1115.56,342.28 1118.17,339.74 1120.99,337.43 1124,335.37 1127.18,333.58 1130.49,332.06 1133.93,330.84 1137.45,329.91 1141.05,329.29 1144.68,328.98 1148.32,328.98 1151.95,329.29 1155.55,329.91 1159.07,330.84 1162.51,332.06 1165.82,333.58 1169,335.37 1172.01,337.43 1174.83,339.74 1177.44,342.28 1179.83,345.03 1181.97,347.98 1183.85,351.1 1185.46,354.37 1186.79,357.77 1187.81,361.27 1188.54,364.84 1188.95,368.46 1189.06,372.11 1188.85,375.75 1188.33,379.36 1187.5,382.91 1186.38,386.37 1184.96,389.73 1183.26,392.96 1181.29,396.02 1179.06,398.91 1176.59,401.59"/>
</g>
<polygon fill="#fff" points="1127.67,357.95 1122.83,357.7 1125.89,353.44"/>
<circle cx="1122.31" cy="354.1" r="0.8" fill="#c8c8d0"/>
<polygon fill="#666" points="1146.43,374.49 1137.5,345.62 1148.41,373.8"/>
<circle cx="1147.42" cy="374.14" r="1.05" fill="#666"/>
<circle cx="1168.9" cy="395.3" r="3.92" fill="#d0d0d0"/><rect x="1167.72" y="390.4" width="2.35" height="1.78" fill="#d0d0d0" transform="rotate(0.0 1168.9 395.3)"/><rect x="1167.72" y="390.4" width="2.35" height="1.78" fill="#d0d0d0" transform="rotate(45.0 1168.9 395.3)"/><rect x="1167.72" y="390.4" width="2.35" height="1.78" fill="#d0d0d0" transform="rotate(90.0 1168.9 395.3)"/><rect x="1167.72" y="390.4" width="2.35" height="1.78" fill="#d0d0d0" transform="rotate(135.0 1168.9 395.3)"/><rect x="1167.72" y="390.4" width="2.35" height="1.78" fill="#d0d0d0" transform="rotate(180.0 1168.9 395.3)"/><rect x="1167.72" y="390.4" width="2.35" height="1.78" fill="#d0d0d0" transform="rotate(225.0 1168.9 395.3)"/><rect x="1167.72" y="390.4" width="2.35" height="1.78" fill="#d0d0d0" transform="rotate(270.0 1168.9 395.3)"/><rect x="1167.72" y="390.4" width="2.35" height="1.78" fill="#d0d0d0" transform="rotate(315.0 1168.9 395.3)"/><circle cx="1168.9" cy="395.3" r="1.4" fill="#fff"/>
<path fill="#d0d0d0" transform="translate(1177.8 390.4) scale(1.0)" d="M0,0h7.6v1.3h-1v3.3l1,1.2v1.2h-3.2v3.1h-1.2v-3.1h-3.2v-1.2l1,-1.2v-3.3h-1z"/>
<clipPath id="r13"><path clip-rule="evenodd" d="M158.9,462.5a26.6,26.6 0 1,0 53.2,0a26.6,26.6 0 1,0 -53.2,0ZM163.9,465.45a18.35,18.35 0 1,0 36.7,0a18.35,18.35 0 1,0 -36.7,0Z"/></clipPath>
<g clip-path="url(#r13)">
<polygon fill="#b8c41c" points="185.5,462.5 155.41,492.59 152.94,489.91 150.71,487.02 148.74,483.96 147.04,480.73 145.62,477.37 144.5,473.91 143.67,470.36 143.15,466.75 142.94,463.11 143.05,459.46 143.46,455.84 144.19,452.27 145.21,448.77 146.54,445.37 148.15,442.1 150.03,438.98 152.17,436.03 154.56,433.28 157.17,430.74 159.99,428.43 163,426.37 166.18,424.58 169.49,423.06 172.93,421.84 176.45,420.91 180.05,420.29 183.68,419.98 187.32,419.98 190.95,420.29 194.55,420.91 198.07,421.84 201.51,423.06 204.82,424.58 208,426.37 211.01,428.43 213.83,430.74 216.44,433.28 218.83,436.03 220.97,438.98 222.85,442.1 224.46,445.37 225.79,448.77 226.81,452.27 227.54,455.84 227.95,459.46 228.06,463.11 227.85,466.75 227.33,470.36 226.5,473.91 225.38,477.37 223.96,480.73 222.26,483.96 220.29,487.02 218.06,489.91 215.59,492.59"/>
</g>
<polygon fill="#666" points="188.22,461.26 166.13,481.87 186.74,459.78"/>
<circle cx="187.48" cy="460.52" r="1.05" fill="#666"/>
<circle cx="207.9" cy="486.3" r="3.92" fill="#d0d0d0"/><rect x="206.72" y="481.4" width="2.35" height="1.78" fill="#d0d0d0" transform="rotate(0.0 207.9 486.3)"/><rect x="206.72" y="481.4" width="2.35" height="1.78" fill="#d0d0d0" transform="rotate(45.0 207.9 486.3)"/><rect x="206.72" y="481.4" width="2.35" height="1.78" fill="#d0d0d0" transform="rotate(90.0 207.9 486.3)"/><rect x="206.72" y="481.4" width="2.35" height="1.78" fill="#d0d0d0" transform="rotate(135.0 207.9 486.3)"/><rect x="206.72" y="481.4" width="2.35" height="1.78" fill="#d0d0d0" transform="rotate(180.0 207.9 486.3)"/><rect x="206.72" y="481.4" width="2.35" height="1.78" fill="#d0d0d0" transform="rotate(225.0 207.9 486.3)"/><rect x="206.72" y="481.4" width="2.35" height="1.78" fill="#d0d0d0" transform="rotate(270.0 207.9 486.3)"/><rect x="206.72" y="481.4" width="2.35" height="1.78" fill="#d0d0d0" transform="rotate(315.0 207.9 486.3)"/><circle cx="207.9" cy="486.3" r="1.4" fill="#fff"/>
<path fill="#d0d0d0" transform="translate(216.8 481.4) scale(1.0)" d="M0,0h7.6v1.3h-1v3.3l1,1.2v1.2h-3.2v3.1h-1.2v-3.1h-3.2v-1.2l1,-1.2v-3.3h-1z"/>
<clipPath id="r14"><path clip-rule="evenodd" d="M350.9,462.5a26.6,26.6 0 1,0 53.2,0a26.6,26.6 0 1,0 -53.2,0ZM355.9,465.45a18.35,18.35 0 1,0 36.7,0a18.35,18.35 0 1,0 -36.7,0Z"/></clipPath>
<g clip-path="url(#r14)">
<polygon fill="#b8c41c" points="377.5,462.5 347.41,492.59 344.94,489.91 342.71,487.02 340.74,483.96 339.04,480.73 337.62,477.37 336.5,473.91 335.67,470.36 335.15,466.75 334.94,463.11 335.05,459.46 335.46,455.84 336.19,452.27 337.21,448.77 338.54,445.37 340.15,442.1 342.03,438.98 344.17,436.03 346.56,433.28 349.17,430.74 351.99,428.43 355,426.37 358.18,424.58 361.49,423.06 364.93,421.84 368.45,420.91 372.05,420.29 375.68,419.98 379.32,419.98 382.95,420.29 386.55,420.91 390.07,421.84 393.51,423.06 396.82,424.58 400,426.37 403.01,428.43 405.83,430.74 408.44,433.28 410.83,436.03 412.97,438.98 414.85,442.1 416.46,445.37 417.79,448.77 418.81,452.27 419.54,455.84 419.95,459.46 420.06,463.11 419.85,466.75 419.33,470.36 418.5,473.91 417.38,477.37 415.96,480.73 414.26,483.96 412.29,487.02 410.06,489.91 407.59,492.59"/>
</g>
<polygon fill="#fff" points="400.16,467.45 404.71,465.76 403.58,470.89"/>
<circle cx="406.61" cy="468.86" r="0.8" fill="#c8c8d0"/>
<polygon fill="#666" points="374.86,461.09 404.67,466.06 374.59,463.18"/>
<circle cx="374.72" cy="462.14" r="1.05" fill="#666"/>
<circle cx="399.9" cy="486.3" r="3.92" fill="#d0d0d0"/><rect x="398.72" y="481.4" width="2.35" height="1.78" fill="#d0d0d0" transform="rotate(0.0 399.9 486.3)"/><rect x="398.72" y="481.4" width="2.35" height="1.78" fill="#d0d0d0" transform="rotate(45.0 399.9 486.3)"/><rect x="398.72" y="481.4" width="2.35" height="1.78" fill="#d0d0d0" transform="rotate(90.0 399.9 486.3)"/><rect x="398.72" y="481.4" width="2.35" height="1.78" fill="#d0d0d0" transform="rotate(135.0 399.9 486.3)"/><rect x="398.72" y="481.4" width="2.35" height="1.78" fill="#d0d0d0" transform="rotate(180.0 399.9 486.3)"/><rect x="398.72" y="481.4" width="2.35" height="1.78" fill="#d0d0d0" transform="rotate(225.0 399.9 486.3)"/><rect x="398.72" y="481.4" width="2.35" height="1.78" fill="#d0d0d0" transform="rotate(270.0 399.9 486.3)"/><rect x="398.72" y="481.4" width="2.35" height="1.78" fill="#d0d0d0" transform="rotate(315.0 399.9 486.3)"/><circle cx="399.9" cy="486.3" r="1.4" fill="#fff"/>
<path fill="#d0d0d0" transform="translate(408.8 481.4) scale(1.0)" d="M0,0h7.6v1.3h-1v3.3l1,1.2v1.2h-3.2v3.1h-1.2v-3.1h-3.2v-1.2l1,-1.2v-3.3h-1z"/>
<clipPath id="r15"><path clip-rule="evenodd" d="M191.9,273.6a102.6,102.6 0 1,0 205.2,0a102.6,102.6 0 1,0 -205.2,0ZM211.19,284.98a70.78,70.78 0 1,0 141.56,0a70.78,70.78 0 1,0 -141.56,0Z"/></clipPath>
<g clip-path="url(#r15)">
<polygon fill="#e2071a" points="294.5,273.6 178.42,389.68 168.82,379.21 160.17,367.95 152.51,355.99 145.92,343.41 140.45,330.31 136.12,316.78 132.98,302.93 131.05,288.86 130.34,274.68 130.86,260.49 132.61,246.39"/>
<polygon fill="#f5c400" points="294.5,273.6 132.61,246.39 135.21,233.9 138.78,221.65 143.28,209.71 148.7,198.16 155,187.06 162.15,176.48"/>
<polygon fill="#b8c41c" points="294.5,273.6 162.15,176.48 171.05,165.39 180.88,155.11 191.57,145.72 203.03,137.29 215.17,129.88 227.91,123.55 241.15,118.35 254.79,114.31 268.73,111.47 282.87,109.85 297.09,109.46 311.29,110.3 325.36,112.37 339.2,115.64 352.71,120.11 365.78,125.72 378.32,132.45 390.22,140.24 401.41,149.02 411.79,158.75 421.29,169.33 429.84,180.7 437.38,192.77 443.84,205.44 449.18,218.63 453.36,232.22 456.35,246.13 458.12,260.25 458.66,274.46 457.97,288.67 456.05,302.77 452.92,316.64 448.6,330.2 443.12,343.32 436.52,355.93 428.86,367.92 420.19,379.19 410.58,389.68"/>
</g>
<polygon fill="#fff" points="359.96,339.06 374.4,341.6 362.5,353.5"/>
<polygon fill="#777777" points="290.4,264.27 368.75,347.85 285.17,269.5"/>
<circle cx="287.78" cy="266.88" r="3.7" fill="#777777"/>
<circle cx="395" cy="393.1" r="4.8" fill="#d0d0d0"/><rect x="393.56" y="387.1" width="2.88" height="2" fill="#d0d0d0" transform="rotate(0.0 395 393.1)"/><rect x="393.56" y="387.1" width="2.88" height="2" fill="#d0d0d0" transform="rotate(45.0 395 393.1)"/><rect x="393.56" y="387.1" width="2.88" height="2" fill="#d0d0d0" transform="rotate(90.0 395 393.1)"/><rect x="393.56" y="387.1" width="2.88" height="2" fill="#d0d0d0" transform="rotate(135.0 395 393.1)"/><rect x="393.56" y="387.1" width="2.88" height="2" fill="#d0d0d0" transform="rotate(180.0 395 393.1)"/><rect x="393.56" y="387.1" width="2.88" height="2" fill="#d0d0d0" transform="rotate(225.0 395 393.1)"/><rect x="393.56" y="387.1" width="2.88" height="2" fill="#d0d0d0" transform="rotate(270.0 395 393.1)"/><rect x="393.56" y="387.1" width="2.88" height="2" fill="#d0d0d0" transform="rotate(315.0 395 393.1)"/><circle cx="395" cy="393.1" r="1.9" fill="#fff"/>
<path fill="#d0d0d0" transform="translate(406.1 387) scale(1.26)" d="M0,0h7.6v1.3h-1v3.3l1,1.2v1.2h-3.2v3.1h-1.2v-3.1h-3.2v-1.2l1,-1.2v-3.3h-1z"/>
</svg>

<!-- table -->
<div class="th" style="left:74px">Channel</div>
<svg class="a" style="left:139px;top:586px" width="11" height="7"><path d="M0.5,0.8 h9.8 l-4.9,5.4z" fill="#141433"/></svg>
<div class="th" style="right:908px">ID</div><svg class="a" style="left:356px;top:580px" width="11" height="13"><path d="M5.3,0.3 L10.3,5.5 H0.3z M0.3,7.5 H10.3 L5.3,12.7z" fill="#d5d5d8"/></svg>
<div class="th" style="right:783.8px;letter-spacing:0.2px">Last Value</div><svg class="a" style="left:479.5px;top:580px" width="11" height="13"><path d="M5.3,0.3 L10.3,5.5 H0.3z M0.3,7.5 H10.3 L5.3,12.7z" fill="#d5d5d8"/></svg>
<div class="th" style="right:469.9px;letter-spacing:0.6px">Minimum</div><svg class="a" style="left:793.5px;top:580px" width="11" height="13"><path d="M5.3,0.3 L10.3,5.5 H0.3z M0.3,7.5 H10.3 L5.3,12.7z" fill="#d5d5d8"/></svg>
<div class="th" style="right:156px;letter-spacing:0.5px">Maximum</div><svg class="a" style="left:1107.5px;top:580px" width="11" height="13"><path d="M5.3,0.3 L10.3,5.5 H0.3z M0.3,7.5 H10.3 L5.3,12.7z" fill="#d5d5d8"/></svg>
<div class="rl" style="top:601px"></div>
<div class="td" style="left:74px;top:621.5px">Age of Code</div>
<div class="td" style="right:888px;top:621.5px">10</div>
<div class="td" style="left:395px;top:621.5px">5 d 20 h 49 <span style="display:inline-block;transform:scaleX(0.72);transform-origin:0 0">…</span></div>
<div class="td" style="right:451px;top:621.5px">5 h 21 m</div>
<div class="td" style="right:137px;top:621.5px">22 d</div>
<div class="rl" style="top:642px"></div>
<svg class="a" style="left:1200px;top:616px" width="26" height="22" viewBox="1200 616 26 22"><circle cx="1214.8" cy="624.5" r="4.48" fill="#3d3d3d"/><rect x="1214.24" y="618.9" width="1.12" height="1.92" fill="#3d3d3d" transform="rotate(0.0 1214.8 624.5)"/><rect x="1214.24" y="618.9" width="1.12" height="1.92" fill="#3d3d3d" transform="rotate(22.5 1214.8 624.5)"/><rect x="1214.24" y="618.9" width="1.12" height="1.92" fill="#3d3d3d" transform="rotate(45.0 1214.8 624.5)"/><rect x="1214.24" y="618.9" width="1.12" height="1.92" fill="#3d3d3d" transform="rotate(67.5 1214.8 624.5)"/><rect x="1214.24" y="618.9" width="1.12" height="1.92" fill="#3d3d3d" transform="rotate(90.0 1214.8 624.5)"/><rect x="1214.24" y="618.9" width="1.12" height="1.92" fill="#3d3d3d" transform="rotate(112.5 1214.8 624.5)"/><rect x="1214.24" y="618.9" width="1.12" height="1.92" fill="#3d3d3d" transform="rotate(135.0 1214.8 624.5)"/><rect x="1214.24" y="618.9" width="1.12" height="1.92" fill="#3d3d3d" transform="rotate(157.5 1214.8 624.5)"/><rect x="1214.24" y="618.9" width="1.12" height="1.92" fill="#3d3d3d" transform="rotate(180.0 1214.8 624.5)"/><rect x="1214.24" y="618.9" width="1.12" height="1.92" fill="#3d3d3d" transform="rotate(202.5 1214.8 624.5)"/><rect x="1214.24" y="618.9" width="1.12" height="1.92" fill="#3d3d3d" transform="rotate(225.0 1214.8 624.5)"/><rect x="1214.24" y="618.9" width="1.12" height="1.92" fill="#3d3d3d" transform="rotate(247.5 1214.8 624.5)"/><rect x="1214.24" y="618.9" width="1.12" height="1.92" fill="#3d3d3d" transform="rotate(270.0 1214.8 624.5)"/><rect x="1214.24" y="618.9" width="1.12" height="1.92" fill="#3d3d3d" transform="rotate(292.5 1214.8 624.5)"/><rect x="1214.24" y="618.9" width="1.12" height="1.92" fill="#3d3d3d" transform="rotate(315.0 1214.8 624.5)"/><rect x="1214.24" y="618.9" width="1.12" height="1.92" fill="#3d3d3d" transform="rotate(337.5 1214.8 624.5)"/><circle cx="1214.8" cy="624.5" r="2" fill="#fff"/><circle cx="1207.6" cy="631.6" r="2.59" fill="#3d3d3d"/><rect x="1207.07" y="628.1" width="1.05" height="1.71" fill="#3d3d3d" transform="rotate(0.0 1207.6 631.6)"/><rect x="1207.07" y="628.1" width="1.05" height="1.71" fill="#3d3d3d" transform="rotate(36.0 1207.6 631.6)"/><rect x="1207.07" y="628.1" width="1.05" height="1.71" fill="#3d3d3d" transform="rotate(72.0 1207.6 631.6)"/><rect x="1207.07" y="628.1" width="1.05" height="1.71" fill="#3d3d3d" transform="rotate(108.0 1207.6 631.6)"/><rect x="1207.07" y="628.1" width="1.05" height="1.71" fill="#3d3d3d" transform="rotate(144.0 1207.6 631.6)"/><rect x="1207.07" y="628.1" width="1.05" height="1.71" fill="#3d3d3d" transform="rotate(180.0 1207.6 631.6)"/><rect x="1207.07" y="628.1" width="1.05" height="1.71" fill="#3d3d3d" transform="rotate(216.0 1207.6 631.6)"/><rect x="1207.07" y="628.1" width="1.05" height="1.71" fill="#3d3d3d" transform="rotate(252.0 1207.6 631.6)"/><rect x="1207.07" y="628.1" width="1.05" height="1.71" fill="#3d3d3d" transform="rotate(288.0 1207.6 631.6)"/><rect x="1207.07" y="628.1" width="1.05" height="1.71" fill="#3d3d3d" transform="rotate(324.0 1207.6 631.6)"/><circle cx="1207.6" cy="631.6" r="1.1" fill="#fff"/></svg>
<div class="td" style="left:74px;top:662.5px">Committed Memory</div>
<div class="td" style="right:888px;top:662.5px">4</div>
<div class="td" style="right:765px;top:662.5px">567 MB</div>
<div class="td" style="right:451px;top:662.5px">103 MB</div>
<div class="td" style="right:137px;top:662.5px">777 MB</div>
<div class="rl" style="top:683px"></div>
<svg class="a" style="left:1200px;top:657px" width="26" height="22" viewBox="1200 657 26 22"><circle cx="1214.8" cy="665.5" r="4.48" fill="#3d3d3d"/><rect x="1214.24" y="659.9" width="1.12" height="1.92" fill="#3d3d3d" transform="rotate(0.0 1214.8 665.5)"/><rect x="1214.24" y="659.9" width="1.12" height="1.92" fill="#3d3d3d" transform="rotate(22.5 1214.8 665.5)"/><rect x="1214.24" y="659.9" width="1.12" height="1.92" fill="#3d3d3d" transform="rotate(45.0 1214.8 665.5)"/><rect x="1214.24" y="659.9" width="1.12" height="1.92" fill="#3d3d3d" transform="rotate(67.5 1214.8 665.5)"/><rect x="1214.24" y="659.9" width="1.12" height="1.92" fill="#3d3d3d" transform="rotate(90.0 1214.8 665.5)"/><rect x="1214.24" y="659.9" width="1.12" height="1.92" fill="#3d3d3d" transform="rotate(112.5 1214.8 665.5)"/><rect x="1214.24" y="659.9" width="1.12" height="1.92" fill="#3d3d3d" transform="rotate(135.0 1214.8 665.5)"/><rect x="1214.24" y="659.9" width="1.12" height="1.92" fill="#3d3d3d" transform="rotate(157.5 1214.8 665.5)"/><rect x="1214.24" y="659.9" width="1.12" height="1.92" fill="#3d3d3d" transform="rotate(180.0 1214.8 665.5)"/><rect x="1214.24" y="659.9" width="1.12" height="1.92" fill="#3d3d3d" transform="rotate(202.5 1214.8 665.5)"/><rect x="1214.24" y="659.9" width="1.12" height="1.92" fill="#3d3d3d" transform="rotate(225.0 1214.8 665.5)"/><rect x="1214.24" y="659.9" width="1.12" height="1.92" fill="#3d3d3d" transform="rotate(247.5 1214.8 665.5)"/><rect x="1214.24" y="659.9" width="1.12" height="1.92" fill="#3d3d3d" transform="rotate(270.0 1214.8 665.5)"/><rect x="1214.24" y="659.9" width="1.12" height="1.92" fill="#3d3d3d" transform="rotate(292.5 1214.8 665.5)"/><rect x="1214.24" y="659.9" width="1.12" height="1.92" fill="#3d3d3d" transform="rotate(315.0 1214.8 665.5)"/><rect x="1214.24" y="659.9" width="1.12" height="1.92" fill="#3d3d3d" transform="rotate(337.5 1214.8 665.5)"/><circle cx="1214.8" cy="665.5" r="2" fill="#fff"/><circle cx="1207.6" cy="672.6" r="2.59" fill="#3d3d3d"/><rect x="1207.07" y="669.1" width="1.05" height="1.71" fill="#3d3d3d" transform="rotate(0.0 1207.6 672.6)"/><rect x="1207.07" y="669.1" width="1.05" height="1.71" fill="#3d3d3d" transform="rotate(36.0 1207.6 672.6)"/><rect x="1207.07" y="669.1" width="1.05" height="1.71" fill="#3d3d3d" transform="rotate(72.0 1207.6 672.6)"/><rect x="1207.07" y="669.1" width="1.05" height="1.71" fill="#3d3d3d" transform="rotate(108.0 1207.6 672.6)"/><rect x="1207.07" y="669.1" width="1.05" height="1.71" fill="#3d3d3d" transform="rotate(144.0 1207.6 672.6)"/><rect x="1207.07" y="669.1" width="1.05" height="1.71" fill="#3d3d3d" transform="rotate(180.0 1207.6 672.6)"/><rect x="1207.07" y="669.1" width="1.05" height="1.71" fill="#3d3d3d" transform="rotate(216.0 1207.6 672.6)"/><rect x="1207.07" y="669.1" width="1.05" height="1.71" fill="#3d3d3d" transform="rotate(252.0 1207.6 672.6)"/><rect x="1207.07" y="669.1" width="1.05" height="1.71" fill="#3d3d3d" transform="rotate(288.0 1207.6 672.6)"/><rect x="1207.07" y="669.1" width="1.05" height="1.71" fill="#3d3d3d" transform="rotate(324.0 1207.6 672.6)"/><circle cx="1207.6" cy="672.6" r="1.1" fill="#fff"/></svg>
<div class="td" style="left:74px;top:703.5px">Configuration Last Saved</div>
<div class="td" style="right:888px;top:703.5px">11</div>
<div class="td" style="right:765px;top:703.5px">8 m 36 s</div>
<div class="td" style="right:451px;top:703.5px">4 s</div>
<div class="td" style="right:137px;top:703.5px">9 h 4 m</div>
<div class="rl" style="top:724px"></div>
<svg class="a" style="left:1200px;top:698px" width="26" height="22" viewBox="1200 698 26 22"><circle cx="1214.8" cy="706.5" r="4.48" fill="#3d3d3d"/><rect x="1214.24" y="700.9" width="1.12" height="1.92" fill="#3d3d3d" transform="rotate(0.0 1214.8 706.5)"/><rect x="1214.24" y="700.9" width="1.12" height="1.92" fill="#3d3d3d" transform="rotate(22.5 1214.8 706.5)"/><rect x="1214.24" y="700.9" width="1.12" height="1.92" fill="#3d3d3d" transform="rotate(45.0 1214.8 706.5)"/><rect x="1214.24" y="700.9" width="1.12" height="1.92" fill="#3d3d3d" transform="rotate(67.5 1214.8 706.5)"/><rect x="1214.24" y="700.9" width="1.12" height="1.92" fill="#3d3d3d" transform="rotate(90.0 1214.8 706.5)"/><rect x="1214.24" y="700.9" width="1.12" height="1.92" fill="#3d3d3d" transform="rotate(112.5 1214.8 706.5)"/><rect x="1214.24" y="700.9" width="1.12" height="1.92" fill="#3d3d3d" transform="rotate(135.0 1214.8 706.5)"/><rect x="1214.24" y="700.9" width="1.12" height="1.92" fill="#3d3d3d" transform="rotate(157.5 1214.8 706.5)"/><rect x="1214.24" y="700.9" width="1.12" height="1.92" fill="#3d3d3d" transform="rotate(180.0 1214.8 706.5)"/><rect x="1214.24" y="700.9" width="1.12" height="1.92" fill="#3d3d3d" transform="rotate(202.5 1214.8 706.5)"/><rect x="1214.24" y="700.9" width="1.12" height="1.92" fill="#3d3d3d" transform="rotate(225.0 1214.8 706.5)"/><rect x="1214.24" y="700.9" width="1.12" height="1.92" fill="#3d3d3d" transform="rotate(247.5 1214.8 706.5)"/><rect x="1214.24" y="700.9" width="1.12" height="1.92" fill="#3d3d3d" transform="rotate(270.0 1214.8 706.5)"/><rect x="1214.24" y="700.9" width="1.12" height="1.92" fill="#3d3d3d" transform="rotate(292.5 1214.8 706.5)"/><rect x="1214.24" y="700.9" width="1.12" height="1.92" fill="#3d3d3d" transform="rotate(315.0 1214.8 706.5)"/><rect x="1214.24" y="700.9" width="1.12" height="1.92" fill="#3d3d3d" transform="rotate(337.5 1214.8 706.5)"/><circle cx="1214.8" cy="706.5" r="2" fill="#fff"/><circle cx="1207.6" cy="713.6" r="2.59" fill="#3d3d3d"/><rect x="1207.07" y="710.1" width="1.05" height="1.71" fill="#3d3d3d" transform="rotate(0.0 1207.6 713.6)"/><rect x="1207.07" y="710.1" width="1.05" height="1.71" fill="#3d3d3d" transform="rotate(36.0 1207.6 713.6)"/><rect x="1207.07" y="710.1" width="1.05" height="1.71" fill="#3d3d3d" transform="rotate(72.0 1207.6 713.6)"/><rect x="1207.07" y="710.1" width="1.05" height="1.71" fill="#3d3d3d" transform="rotate(108.0 1207.6 713.6)"/><rect x="1207.07" y="710.1" width="1.05" height="1.71" fill="#3d3d3d" transform="rotate(144.0 1207.6 713.6)"/><rect x="1207.07" y="710.1" width="1.05" height="1.71" fill="#3d3d3d" transform="rotate(180.0 1207.6 713.6)"/><rect x="1207.07" y="710.1" width="1.05" height="1.71" fill="#3d3d3d" transform="rotate(216.0 1207.6 713.6)"/><rect x="1207.07" y="710.1" width="1.05" height="1.71" fill="#3d3d3d" transform="rotate(252.0 1207.6 713.6)"/><rect x="1207.07" y="710.1" width="1.05" height="1.71" fill="#3d3d3d" transform="rotate(288.0 1207.6 713.6)"/><rect x="1207.07" y="710.1" width="1.05" height="1.71" fill="#3d3d3d" transform="rotate(324.0 1207.6 713.6)"/><circle cx="1207.6" cy="713.6" r="1.1" fill="#fff"/></svg>
<div class="td" style="left:74px;top:744.5px">CPU Load</div>
<div class="td" style="right:888px;top:744.5px">5</div>
<div class="td" style="right:765px;top:744.5px">4 %</div>
<div class="td" style="right:451px;top:744.5px">0 %</div>
<div class="td" style="right:137px;top:744.5px">5 %</div>
<div class="rl" style="top:765px"></div>
<svg class="a" style="left:1200px;top:739px" width="26" height="22" viewBox="1200 739 26 22"><circle cx="1214.8" cy="747.5" r="4.48" fill="#3d3d3d"/><rect x="1214.24" y="741.9" width="1.12" height="1.92" fill="#3d3d3d" transform="rotate(0.0 1214.8 747.5)"/><rect x="1214.24" y="741.9" width="1.12" height="1.92" fill="#3d3d3d" transform="rotate(22.5 1214.8 747.5)"/><rect x="1214.24" y="741.9" width="1.12" height="1.92" fill="#3d3d3d" transform="rotate(45.0 1214.8 747.5)"/><rect x="1214.24" y="741.9" width="1.12" height="1.92" fill="#3d3d3d" transform="rotate(67.5 1214.8 747.5)"/><rect x="1214.24" y="741.9" width="1.12" height="1.92" fill="#3d3d3d" transform="rotate(90.0 1214.8 747.5)"/><rect x="1214.24" y="741.9" width="1.12" height="1.92" fill="#3d3d3d" transform="rotate(112.5 1214.8 747.5)"/><rect x="1214.24" y="741.9" width="1.12" height="1.92" fill="#3d3d3d" transform="rotate(135.0 1214.8 747.5)"/><rect x="1214.24" y="741.9" width="1.12" height="1.92" fill="#3d3d3d" transform="rotate(157.5 1214.8 747.5)"/><rect x="1214.24" y="741.9" width="1.12" height="1.92" fill="#3d3d3d" transform="rotate(180.0 1214.8 747.5)"/><rect x="1214.24" y="741.9" width="1.12" height="1.92" fill="#3d3d3d" transform="rotate(202.5 1214.8 747.5)"/><rect x="1214.24" y="741.9" width="1.12" height="1.92" fill="#3d3d3d" transform="rotate(225.0 1214.8 747.5)"/><rect x="1214.24" y="741.9" width="1.12" height="1.92" fill="#3d3d3d" transform="rotate(247.5 1214.8 747.5)"/><rect x="1214.24" y="741.9" width="1.12" height="1.92" fill="#3d3d3d" transform="rotate(270.0 1214.8 747.5)"/><rect x="1214.24" y="741.9" width="1.12" height="1.92" fill="#3d3d3d" transform="rotate(292.5 1214.8 747.5)"/><rect x="1214.24" y="741.9" width="1.12" height="1.92" fill="#3d3d3d" transform="rotate(315.0 1214.8 747.5)"/><rect x="1214.24" y="741.9" width="1.12" height="1.92" fill="#3d3d3d" transform="rotate(337.5 1214.8 747.5)"/><circle cx="1214.8" cy="747.5" r="2" fill="#fff"/><circle cx="1207.6" cy="754.6" r="2.59" fill="#3d3d3d"/><rect x="1207.07" y="751.1" width="1.05" height="1.71" fill="#3d3d3d" transform="rotate(0.0 1207.6 754.6)"/><rect x="1207.07" y="751.1" width="1.05" height="1.71" fill="#3d3d3d" transform="rotate(36.0 1207.6 754.6)"/><rect x="1207.07" y="751.1" width="1.05" height="1.71" fill="#3d3d3d" transform="rotate(72.0 1207.6 754.6)"/><rect x="1207.07" y="751.1" width="1.05" height="1.71" fill="#3d3d3d" transform="rotate(108.0 1207.6 754.6)"/><rect x="1207.07" y="751.1" width="1.05" height="1.71" fill="#3d3d3d" transform="rotate(144.0 1207.6 754.6)"/><rect x="1207.07" y="751.1" width="1.05" height="1.71" fill="#3d3d3d" transform="rotate(180.0 1207.6 754.6)"/><rect x="1207.07" y="751.1" width="1.05" height="1.71" fill="#3d3d3d" transform="rotate(216.0 1207.6 754.6)"/><rect x="1207.07" y="751.1" width="1.05" height="1.71" fill="#3d3d3d" transform="rotate(252.0 1207.6 754.6)"/><rect x="1207.07" y="751.1" width="1.05" height="1.71" fill="#3d3d3d" transform="rotate(288.0 1207.6 754.6)"/><rect x="1207.07" y="751.1" width="1.05" height="1.71" fill="#3d3d3d" transform="rotate(324.0 1207.6 754.6)"/><circle cx="1207.6" cy="754.6" r="1.1" fill="#fff"/></svg>
<div class="td" style="left:74px;top:785.5px">Downtime</div>
<div class="td" style="right:888px;top:785.5px">-4</div>
<div class="td" style="right:765px;top:785.5px"></div>
<div class="td" style="right:451px;top:785.5px"></div>
<div class="td" style="right:137px;top:785.5px"></div>
<div class="rl" style="top:806px"></div>
<svg class="a" style="left:1200px;top:780px" width="26" height="22" viewBox="1200 780 26 22"><circle cx="1214.8" cy="788.5" r="4.48" fill="#3d3d3d"/><rect x="1214.24" y="782.9" width="1.12" height="1.92" fill="#3d3d3d" transform="rotate(0.0 1214.8 788.5)"/><rect x="1214.24" y="782.9" width="1.12" height="1.92" fill="#3d3d3d" transform="rotate(22.5 1214.8 788.5)"/><rect x="1214.24" y="782.9" width="1.12" height="1.92" fill="#3d3d3d" transform="rotate(45.0 1214.8 788.5)"/><rect x="1214.24" y="782.9" width="1.12" height="1.92" fill="#3d3d3d" transform="rotate(67.5 1214.8 788.5)"/><rect x="1214.24" y="782.9" width="1.12" height="1.92" fill="#3d3d3d" transform="rotate(90.0 1214.8 788.5)"/><rect x="1214.24" y="782.9" width="1.12" height="1.92" fill="#3d3d3d" transform="rotate(112.5 1214.8 788.5)"/><rect x="1214.24" y="782.9" width="1.12" height="1.92" fill="#3d3d3d" transform="rotate(135.0 1214.8 788.5)"/><rect x="1214.24" y="782.9" width="1.12" height="1.92" fill="#3d3d3d" transform="rotate(157.5 1214.8 788.5)"/><rect x="1214.24" y="782.9" width="1.12" height="1.92" fill="#3d3d3d" transform="rotate(180.0 1214.8 788.5)"/><rect x="1214.24" y="782.9" width="1.12" height="1.92" fill="#3d3d3d" transform="rotate(202.5 1214.8 788.5)"/><rect x="1214.24" y="782.9" width="1.12" height="1.92" fill="#3d3d3d" transform="rotate(225.0 1214.8 788.5)"/><rect x="1214.24" y="782.9" width="1.12" height="1.92" fill="#3d3d3d" transform="rotate(247.5 1214.8 788.5)"/><rect x="1214.24" y="782.9" width="1.12" height="1.92" fill="#3d3d3d" transform="rotate(270.0 1214.8 788.5)"/><rect x="1214.24" y="782.9" width="1.12" height="1.92" fill="#3d3d3d" transform="rotate(292.5 1214.8 788.5)"/><rect x="1214.24" y="782.9" width="1.12" height="1.92" fill="#3d3d3d" transform="rotate(315.0 1214.8 788.5)"/><rect x="1214.24" y="782.9" width="1.12" height="1.92" fill="#3d3d3d" transform="rotate(337.5 1214.8 788.5)"/><circle cx="1214.8" cy="788.5" r="2" fill="#fff"/><circle cx="1207.6" cy="795.6" r="2.59" fill="#3d3d3d"/><rect x="1207.07" y="792.1" width="1.05" height="1.71" fill="#3d3d3d" transform="rotate(0.0 1207.6 795.6)"/><rect x="1207.07" y="792.1" width="1.05" height="1.71" fill="#3d3d3d" transform="rotate(36.0 1207.6 795.6)"/><rect x="1207.07" y="792.1" width="1.05" height="1.71" fill="#3d3d3d" transform="rotate(72.0 1207.6 795.6)"/><rect x="1207.07" y="792.1" width="1.05" height="1.71" fill="#3d3d3d" transform="rotate(108.0 1207.6 795.6)"/><rect x="1207.07" y="792.1" width="1.05" height="1.71" fill="#3d3d3d" transform="rotate(144.0 1207.6 795.6)"/><rect x="1207.07" y="792.1" width="1.05" height="1.71" fill="#3d3d3d" transform="rotate(180.0 1207.6 795.6)"/><rect x="1207.07" y="792.1" width="1.05" height="1.71" fill="#3d3d3d" transform="rotate(216.0 1207.6 795.6)"/><rect x="1207.07" y="792.1" width="1.05" height="1.71" fill="#3d3d3d" transform="rotate(252.0 1207.6 795.6)"/><rect x="1207.07" y="792.1" width="1.05" height="1.71" fill="#3d3d3d" transform="rotate(288.0 1207.6 795.6)"/><rect x="1207.07" y="792.1" width="1.05" height="1.71" fill="#3d3d3d" transform="rotate(324.0 1207.6 795.6)"/><circle cx="1207.6" cy="795.6" r="1.1" fill="#fff"/></svg>
<div class="td" style="left:74px;top:826.5px">Free Page File Memory</div>
<div class="td" style="right:888px;top:826.5px">2</div>
<div class="td" style="right:765px;top:826.5px">6.558 MB</div>
<div class="td" style="right:451px;top:826.5px">2.235 MB</div>
<div class="td" style="right:137px;top:826.5px">11.689 MB</div>
<div class="rl" style="top:847px"></div>
<svg class="a" style="left:1200px;top:821px" width="26" height="22" viewBox="1200 821 26 22"><circle cx="1214.8" cy="829.5" r="4.48" fill="#3d3d3d"/><rect x="1214.24" y="823.9" width="1.12" height="1.92" fill="#3d3d3d" transform="rotate(0.0 1214.8 829.5)"/><rect x="1214.24" y="823.9" width="1.12" height="1.92" fill="#3d3d3d" transform="rotate(22.5 1214.8 829.5)"/><rect x="1214.24" y="823.9" width="1.12" height="1.92" fill="#3d3d3d" transform="rotate(45.0 1214.8 829.5)"/><rect x="1214.24" y="823.9" width="1.12" height="1.92" fill="#3d3d3d" transform="rotate(67.5 1214.8 829.5)"/><rect x="1214.24" y="823.9" width="1.12" height="1.92" fill="#3d3d3d" transform="rotate(90.0 1214.8 829.5)"/><rect x="1214.24" y="823.9" width="1.12" height="1.92" fill="#3d3d3d" transform="rotate(112.5 1214.8 829.5)"/><rect x="1214.24" y="823.9" width="1.12" height="1.92" fill="#3d3d3d" transform="rotate(135.0 1214.8 829.5)"/><rect x="1214.24" y="823.9" width="1.12" height="1.92" fill="#3d3d3d" transform="rotate(157.5 1214.8 829.5)"/><rect x="1214.24" y="823.9" width="1.12" height="1.92" fill="#3d3d3d" transform="rotate(180.0 1214.8 829.5)"/><rect x="1214.24" y="823.9" width="1.12" height="1.92" fill="#3d3d3d" transform="rotate(202.5 1214.8 829.5)"/><rect x="1214.24" y="823.9" width="1.12" height="1.92" fill="#3d3d3d" transform="rotate(225.0 1214.8 829.5)"/><rect x="1214.24" y="823.9" width="1.12" height="1.92" fill="#3d3d3d" transform="rotate(247.5 1214.8 829.5)"/><rect x="1214.24" y="823.9" width="1.12" height="1.92" fill="#3d3d3d" transform="rotate(270.0 1214.8 829.5)"/><rect x="1214.24" y="823.9" width="1.12" height="1.92" fill="#3d3d3d" transform="rotate(292.5 1214.8 829.5)"/><rect x="1214.24" y="823.9" width="1.12" height="1.92" fill="#3d3d3d" transform="rotate(315.0 1214.8 829.5)"/><rect x="1214.24" y="823.9" width="1.12" height="1.92" fill="#3d3d3d" transform="rotate(337.5 1214.8 829.5)"/><circle cx="1214.8" cy="829.5" r="2" fill="#fff"/><circle cx="1207.6" cy="836.6" r="2.59" fill="#3d3d3d"/><rect x="1207.07" y="833.1" width="1.05" height="1.71" fill="#3d3d3d" transform="rotate(0.0 1207.6 836.6)"/><rect x="1207.07" y="833.1" width="1.05" height="1.71" fill="#3d3d3d" transform="rotate(36.0 1207.6 836.6)"/><rect x="1207.07" y="833.1" width="1.05" height="1.71" fill="#3d3d3d" transform="rotate(72.0 1207.6 836.6)"/><rect x="1207.07" y="833.1" width="1.05" height="1.71" fill="#3d3d3d" transform="rotate(108.0 1207.6 836.6)"/><rect x="1207.07" y="833.1" width="1.05" height="1.71" fill="#3d3d3d" transform="rotate(144.0 1207.6 836.6)"/><rect x="1207.07" y="833.1" width="1.05" height="1.71" fill="#3d3d3d" transform="rotate(180.0 1207.6 836.6)"/><rect x="1207.07" y="833.1" width="1.05" height="1.71" fill="#3d3d3d" transform="rotate(216.0 1207.6 836.6)"/><rect x="1207.07" y="833.1" width="1.05" height="1.71" fill="#3d3d3d" transform="rotate(252.0 1207.6 836.6)"/><rect x="1207.07" y="833.1" width="1.05" height="1.71" fill="#3d3d3d" transform="rotate(288.0 1207.6 836.6)"/><rect x="1207.07" y="833.1" width="1.05" height="1.71" fill="#3d3d3d" transform="rotate(324.0 1207.6 836.6)"/><circle cx="1207.6" cy="836.6" r="1.1" fill="#fff"/></svg>
<div class="td" style="left:74px;top:867.5px">Free Physical Memory</div>
<div class="td" style="right:888px;top:867.5px">3</div>
<div class="td" style="right:765px;top:867.5px">5.294 MB</div>
<div class="td" style="right:451px;top:867.5px">3.308 MB</div>
<div class="td" style="right:137px;top:867.5px">9.919 MB</div>
<div class="rl" style="top:888px"></div>
<svg class="a" style="left:1200px;top:862px" width="26" height="22" viewBox="1200 862 26 22"><circle cx="1214.8" cy="870.5" r="4.48" fill="#3d3d3d"/><rect x="1214.24" y="864.9" width="1.12" height="1.92" fill="#3d3d3d" transform="rotate(0.0 1214.8 870.5)"/><rect x="1214.24" y="864.9" width="1.12" height="1.92" fill="#3d3d3d" transform="rotate(22.5 1214.8 870.5)"/><rect x="1214.24" y="864.9" width="1.12" height="1.92" fill="#3d3d3d" transform="rotate(45.0 1214.8 870.5)"/><rect x="1214.24" y="864.9" width="1.12" height="1.92" fill="#3d3d3d" transform="rotate(67.5 1214.8 870.5)"/><rect x="1214.24" y="864.9" width="1.12" height="1.92" fill="#3d3d3d" transform="rotate(90.0 1214.8 870.5)"/><rect x="1214.24" y="864.9" width="1.12" height="1.92" fill="#3d3d3d" transform="rotate(112.5 1214.8 870.5)"/><rect x="1214.24" y="864.9" width="1.12" height="1.92" fill="#3d3d3d" transform="rotate(135.0 1214.8 870.5)"/><rect x="1214.24" y="864.9" width="1.12" height="1.92" fill="#3d3d3d" transform="rotate(157.5 1214.8 870.5)"/><rect x="1214.24" y="864.9" width="1.12" height="1.92" fill="#3d3d3d" transform="rotate(180.0 1214.8 870.5)"/><rect x="1214.24" y="864.9" width="1.12" height="1.92" fill="#3d3d3d" transform="rotate(202.5 1214.8 870.5)"/><rect x="1214.24" y="864.9" width="1.12" height="1.92" fill="#3d3d3d" transform="rotate(225.0 1214.8 870.5)"/><rect x="1214.24" y="864.9" width="1.12" height="1.92" fill="#3d3d3d" transform="rotate(247.5 1214.8 870.5)"/><rect x="1214.24" y="864.9" width="1.12" height="1.92" fill="#3d3d3d" transform="rotate(270.0 1214.8 870.5)"/><rect x="1214.24" y="864.9" width="1.12" height="1.92" fill="#3d3d3d" transform="rotate(292.5 1214.8 870.5)"/><rect x="1214.24" y="864.9" width="1.12" height="1.92" fill="#3d3d3d" transform="rotate(315.0 1214.8 870.5)"/><rect x="1214.24" y="864.9" width="1.12" height="1.92" fill="#3d3d3d" transform="rotate(337.5 1214.8 870.5)"/><circle cx="1214.8" cy="870.5" r="2" fill="#fff"/><circle cx="1207.6" cy="877.6" r="2.59" fill="#3d3d3d"/><rect x="1207.07" y="874.1" width="1.05" height="1.71" fill="#3d3d3d" transform="rotate(0.0 1207.6 877.6)"/><rect x="1207.07" y="874.1" width="1.05" height="1.71" fill="#3d3d3d" transform="rotate(36.0 1207.6 877.6)"/><rect x="1207.07" y="874.1" width="1.05" height="1.71" fill="#3d3d3d" transform="rotate(72.0 1207.6 877.6)"/><rect x="1207.07" y="874.1" width="1.05" height="1.71" fill="#3d3d3d" transform="rotate(108.0 1207.6 877.6)"/><rect x="1207.07" y="874.1" width="1.05" height="1.71" fill="#3d3d3d" transform="rotate(144.0 1207.6 877.6)"/><rect x="1207.07" y="874.1" width="1.05" height="1.71" fill="#3d3d3d" transform="rotate(180.0 1207.6 877.6)"/><rect x="1207.07" y="874.1" width="1.05" height="1.71" fill="#3d3d3d" transform="rotate(216.0 1207.6 877.6)"/><rect x="1207.07" y="874.1" width="1.05" height="1.71" fill="#3d3d3d" transform="rotate(252.0 1207.6 877.6)"/><rect x="1207.07" y="874.1" width="1.05" height="1.71" fill="#3d3d3d" transform="rotate(288.0 1207.6 877.6)"/><rect x="1207.07" y="874.1" width="1.05" height="1.71" fill="#3d3d3d" transform="rotate(324.0 1207.6 877.6)"/><circle cx="1207.6" cy="877.6" r="1.1" fill="#fff"/></svg>
<div class="td" style="left:74px;top:908.5px">Free Virtual Memory</div>
<div class="td" style="right:888px;top:908.5px">1</div>
<div class="td" style="left:395px;top:908.5px">134.209.17<span style="display:inline-block;transform:scaleX(0.72);transform-origin:0 0">…</span></div>
<div class="td" style="right:451px;top:908.5px">134.208.861 MB</div>
<div class="td" style="right:137px;top:908.5px">134.209.223 MB</div>
<div class="rl" style="top:929px"></div>
<svg class="a" style="left:1200px;top:903px" width="26" height="22" viewBox="1200 903 26 22"><circle cx="1214.8" cy="911.5" r="4.48" fill="#3d3d3d"/><rect x="1214.24" y="905.9" width="1.12" height="1.92" fill="#3d3d3d" transform="rotate(0.0 1214.8 911.5)"/><rect x="1214.24" y="905.9" width="1.12" height="1.92" fill="#3d3d3d" transform="rotate(22.5 1214.8 911.5)"/><rect x="1214.24" y="905.9" width="1.12" height="1.92" fill="#3d3d3d" transform="rotate(45.0 1214.8 911.5)"/><rect x="1214.24" y="905.9" width="1.12" height="1.92" fill="#3d3d3d" transform="rotate(67.5 1214.8 911.5)"/><rect x="1214.24" y="905.9" width="1.12" height="1.92" fill="#3d3d3d" transform="rotate(90.0 1214.8 911.5)"/><rect x="1214.24" y="905.9" width="1.12" height="1.92" fill="#3d3d3d" transform="rotate(112.5 1214.8 911.5)"/><rect x="1214.24" y="905.9" width="1.12" height="1.92" fill="#3d3d3d" transform="rotate(135.0 1214.8 911.5)"/><rect x="1214.24" y="905.9" width="1.12" height="1.92" fill="#3d3d3d" transform="rotate(157.5 1214.8 911.5)"/><rect x="1214.24" y="905.9" width="1.12" height="1.92" fill="#3d3d3d" transform="rotate(180.0 1214.8 911.5)"/><rect x="1214.24" y="905.9" width="1.12" height="1.92" fill="#3d3d3d" transform="rotate(202.5 1214.8 911.5)"/><rect x="1214.24" y="905.9" width="1.12" height="1.92" fill="#3d3d3d" transform="rotate(225.0 1214.8 911.5)"/><rect x="1214.24" y="905.9" width="1.12" height="1.92" fill="#3d3d3d" transform="rotate(247.5 1214.8 911.5)"/><rect x="1214.24" y="905.9" width="1.12" height="1.92" fill="#3d3d3d" transform="rotate(270.0 1214.8 911.5)"/><rect x="1214.24" y="905.9" width="1.12" height="1.92" fill="#3d3d3d" transform="rotate(292.5 1214.8 911.5)"/><rect x="1214.24" y="905.9" width="1.12" height="1.92" fill="#3d3d3d" transform="rotate(315.0 1214.8 911.5)"/><rect x="1214.24" y="905.9" width="1.12" height="1.92" fill="#3d3d3d" transform="rotate(337.5 1214.8 911.5)"/><circle cx="1214.8" cy="911.5" r="2" fill="#fff"/><circle cx="1207.6" cy="918.6" r="2.59" fill="#3d3d3d"/><rect x="1207.07" y="915.1" width="1.05" height="1.71" fill="#3d3d3d" transform="rotate(0.0 1207.6 918.6)"/><rect x="1207.07" y="915.1" width="1.05" height="1.71" fill="#3d3d3d" transform="rotate(36.0 1207.6 918.6)"/><rect x="1207.07" y="915.1" width="1.05" height="1.71" fill="#3d3d3d" transform="rotate(72.0 1207.6 918.6)"/><rect x="1207.07" y="915.1" width="1.05" height="1.71" fill="#3d3d3d" transform="rotate(108.0 1207.6 918.6)"/><rect x="1207.07" y="915.1" width="1.05" height="1.71" fill="#3d3d3d" transform="rotate(144.0 1207.6 918.6)"/><rect x="1207.07" y="915.1" width="1.05" height="1.71" fill="#3d3d3d" transform="rotate(180.0 1207.6 918.6)"/><rect x="1207.07" y="915.1" width="1.05" height="1.71" fill="#3d3d3d" transform="rotate(216.0 1207.6 918.6)"/><rect x="1207.07" y="915.1" width="1.05" height="1.71" fill="#3d3d3d" transform="rotate(252.0 1207.6 918.6)"/><rect x="1207.07" y="915.1" width="1.05" height="1.71" fill="#3d3d3d" transform="rotate(288.0 1207.6 918.6)"/><rect x="1207.07" y="915.1" width="1.05" height="1.71" fill="#3d3d3d" transform="rotate(324.0 1207.6 918.6)"/><circle cx="1207.6" cy="918.6" r="1.1" fill="#fff"/></svg>
<div class="td" style="left:74px;top:949.5px">Handles</div>
<div class="td" style="right:888px;top:949.5px">6</div>
<div class="td" style="right:765px;top:949.5px">701 #</div>
<div class="td" style="right:451px;top:949.5px">579 #</div>
<div class="td" style="right:137px;top:949.5px">772 #</div>
<div class="rl" style="top:970px"></div>
<svg class="a" style="left:1200px;top:944px" width="26" height="22" viewBox="1200 944 26 22"><circle cx="1214.8" cy="952.5" r="4.48" fill="#3d3d3d"/><rect x="1214.24" y="946.9" width="1.12" height="1.92" fill="#3d3d3d" transform="rotate(0.0 1214.8 952.5)"/><rect x="1214.24" y="946.9" width="1.12" height="1.92" fill="#3d3d3d" transform="rotate(22.5 1214.8 952.5)"/><rect x="1214.24" y="946.9" width="1.12" height="1.92" fill="#3d3d3d" transform="rotate(45.0 1214.8 952.5)"/><rect x="1214.24" y="946.9" width="1.12" height="1.92" fill="#3d3d3d" transform="rotate(67.5 1214.8 952.5)"/><rect x="1214.24" y="946.9" width="1.12" height="1.92" fill="#3d3d3d" transform="rotate(90.0 1214.8 952.5)"/><rect x="1214.24" y="946.9" width="1.12" height="1.92" fill="#3d3d3d" transform="rotate(112.5 1214.8 952.5)"/><rect x="1214.24" y="946.9" width="1.12" height="1.92" fill="#3d3d3d" transform="rotate(135.0 1214.8 952.5)"/><rect x="1214.24" y="946.9" width="1.12" height="1.92" fill="#3d3d3d" transform="rotate(157.5 1214.8 952.5)"/><rect x="1214.24" y="946.9" width="1.12" height="1.92" fill="#3d3d3d" transform="rotate(180.0 1214.8 952.5)"/><rect x="1214.24" y="946.9" width="1.12" height="1.92" fill="#3d3d3d" transform="rotate(202.5 1214.8 952.5)"/><rect x="1214.24" y="946.9" width="1.12" height="1.92" fill="#3d3d3d" transform="rotate(225.0 1214.8 952.5)"/><rect x="1214.24" y="946.9" width="1.12" height="1.92" fill="#3d3d3d" transform="rotate(247.5 1214.8 952.5)"/><rect x="1214.24" y="946.9" width="1.12" height="1.92" fill="#3d3d3d" transform="rotate(270.0 1214.8 952.5)"/><rect x="1214.24" y="946.9" width="1.12" height="1.92" fill="#3d3d3d" transform="rotate(292.5 1214.8 952.5)"/><rect x="1214.24" y="946.9" width="1.12" height="1.92" fill="#3d3d3d" transform="rotate(315.0 1214.8 952.5)"/><rect x="1214.24" y="946.9" width="1.12" height="1.92" fill="#3d3d3d" transform="rotate(337.5 1214.8 952.5)"/><circle cx="1214.8" cy="952.5" r="2" fill="#fff"/><circle cx="1207.6" cy="959.6" r="2.59" fill="#3d3d3d"/><rect x="1207.07" y="956.1" width="1.05" height="1.71" fill="#3d3d3d" transform="rotate(0.0 1207.6 959.6)"/><rect x="1207.07" y="956.1" width="1.05" height="1.71" fill="#3d3d3d" transform="rotate(36.0 1207.6 959.6)"/><rect x="1207.07" y="956.1" width="1.05" height="1.71" fill="#3d3d3d" transform="rotate(72.0 1207.6 959.6)"/><rect x="1207.07" y="956.1" width="1.05" height="1.71" fill="#3d3d3d" transform="rotate(108.0 1207.6 959.6)"/><rect x="1207.07" y="956.1" width="1.05" height="1.71" fill="#3d3d3d" transform="rotate(144.0 1207.6 959.6)"/><rect x="1207.07" y="956.1" width="1.05" height="1.71" fill="#3d3d3d" transform="rotate(180.0 1207.6 959.6)"/><rect x="1207.07" y="956.1" width="1.05" height="1.71" fill="#3d3d3d" transform="rotate(216.0 1207.6 959.6)"/><rect x="1207.07" y="956.1" width="1.05" height="1.71" fill="#3d3d3d" transform="rotate(252.0 1207.6 959.6)"/><rect x="1207.07" y="956.1" width="1.05" height="1.71" fill="#3d3d3d" transform="rotate(288.0 1207.6 959.6)"/><rect x="1207.07" y="956.1" width="1.05" height="1.71" fill="#3d3d3d" transform="rotate(324.0 1207.6 959.6)"/><circle cx="1207.6" cy="959.6" r="1.1" fill="#fff"/></svg>
<div class="td" style="left:74px;top:990.5px">Health</div>
<div class="td" style="right:888px;top:990.5px">0</div>
<div class="td" style="right:765px;top:990.5px">100 %</div>
<div class="td" style="right:451px;top:990.5px">100 %</div>
<div class="td" style="right:137px;top:990.5px">100 %</div>
<div class="rl" style="top:1011px"></div>
<svg class="a" style="left:1200px;top:985px" width="26" height="22" viewBox="1200 985 26 22"><circle cx="1214.8" cy="993.5" r="4.48" fill="#3d3d3d"/><rect x="1214.24" y="987.9" width="1.12" height="1.92" fill="#3d3d3d" transform="rotate(0.0 1214.8 993.5)"/><rect x="1214.24" y="987.9" width="1.12" height="1.92" fill="#3d3d3d" transform="rotate(22.5 1214.8 993.5)"/><rect x="1214.24" y="987.9" width="1.12" height="1.92" fill="#3d3d3d" transform="rotate(45.0 1214.8 993.5)"/><rect x="1214.24" y="987.9" width="1.12" height="1.92" fill="#3d3d3d" transform="rotate(67.5 1214.8 993.5)"/><rect x="1214.24" y="987.9" width="1.12" height="1.92" fill="#3d3d3d" transform="rotate(90.0 1214.8 993.5)"/><rect x="1214.24" y="987.9" width="1.12" height="1.92" fill="#3d3d3d" transform="rotate(112.5 1214.8 993.5)"/><rect x="1214.24" y="987.9" width="1.12" height="1.92" fill="#3d3d3d" transform="rotate(135.0 1214.8 993.5)"/><rect x="1214.24" y="987.9" width="1.12" height="1.92" fill="#3d3d3d" transform="rotate(157.5 1214.8 993.5)"/><rect x="1214.24" y="987.9" width="1.12" height="1.92" fill="#3d3d3d" transform="rotate(180.0 1214.8 993.5)"/><rect x="1214.24" y="987.9" width="1.12" height="1.92" fill="#3d3d3d" transform="rotate(202.5 1214.8 993.5)"/><rect x="1214.24" y="987.9" width="1.12" height="1.92" fill="#3d3d3d" transform="rotate(225.0 1214.8 993.5)"/><rect x="1214.24" y="987.9" width="1.12" height="1.92" fill="#3d3d3d" transform="rotate(247.5 1214.8 993.5)"/><rect x="1214.24" y="987.9" width="1.12" height="1.92" fill="#3d3d3d" transform="rotate(270.0 1214.8 993.5)"/><rect x="1214.24" y="987.9" width="1.12" height="1.92" fill="#3d3d3d" transform="rotate(292.5 1214.8 993.5)"/><rect x="1214.24" y="987.9" width="1.12" height="1.92" fill="#3d3d3d" transform="rotate(315.0 1214.8 993.5)"/><rect x="1214.24" y="987.9" width="1.12" height="1.92" fill="#3d3d3d" transform="rotate(337.5 1214.8 993.5)"/><circle cx="1214.8" cy="993.5" r="2" fill="#fff"/><circle cx="1207.6" cy="1000.6" r="2.59" fill="#3d3d3d"/><rect x="1207.07" y="997.1" width="1.05" height="1.71" fill="#3d3d3d" transform="rotate(0.0 1207.6 1000.6)"/><rect x="1207.07" y="997.1" width="1.05" height="1.71" fill="#3d3d3d" transform="rotate(36.0 1207.6 1000.6)"/><rect x="1207.07" y="997.1" width="1.05" height="1.71" fill="#3d3d3d" transform="rotate(72.0 1207.6 1000.6)"/><rect x="1207.07" y="997.1" width="1.05" height="1.71" fill="#3d3d3d" transform="rotate(108.0 1207.6 1000.6)"/><rect x="1207.07" y="997.1" width="1.05" height="1.71" fill="#3d3d3d" transform="rotate(144.0 1207.6 1000.6)"/><rect x="1207.07" y="997.1" width="1.05" height="1.71" fill="#3d3d3d" transform="rotate(180.0 1207.6 1000.6)"/><rect x="1207.07" y="997.1" width="1.05" height="1.71" fill="#3d3d3d" transform="rotate(216.0 1207.6 1000.6)"/><rect x="1207.07" y="997.1" width="1.05" height="1.71" fill="#3d3d3d" transform="rotate(252.0 1207.6 1000.6)"/><rect x="1207.07" y="997.1" width="1.05" height="1.71" fill="#3d3d3d" transform="rotate(288.0 1207.6 1000.6)"/><rect x="1207.07" y="997.1" width="1.05" height="1.71" fill="#3d3d3d" transform="rotate(324.0 1207.6 1000.6)"/><circle cx="1207.6" cy="1000.6" r="1.1" fill="#fff"/></svg>
<div class="td" style="left:74px;top:1031.5px">Maintenance Days</div>
<div class="td" style="right:888px;top:1031.5px">9</div>
<div class="td" style="right:765px;top:1031.5px">4.662 #</div>
<div class="td" style="right:451px;top:1031.5px">4.662 #</div>
<div class="td" style="right:137px;top:1031.5px">4.698 #</div>
<div class="rl" style="top:1052px"></div>
<svg class="a" style="left:1200px;top:1026px" width="26" height="22" viewBox="1200 1026 26 22"><circle cx="1214.8" cy="1034.5" r="4.48" fill="#3d3d3d"/><rect x="1214.24" y="1028.9" width="1.12" height="1.92" fill="#3d3d3d" transform="rotate(0.0 1214.8 1034.5)"/><rect x="1214.24" y="1028.9" width="1.12" height="1.92" fill="#3d3d3d" transform="rotate(22.5 1214.8 1034.5)"/><rect x="1214.24" y="1028.9" width="1.12" height="1.92" fill="#3d3d3d" transform="rotate(45.0 1214.8 1034.5)"/><rect x="1214.24" y="1028.9" width="1.12" height="1.92" fill="#3d3d3d" transform="rotate(67.5 1214.8 1034.5)"/><rect x="1214.24" y="1028.9" width="1.12" height="1.92" fill="#3d3d3d" transform="rotate(90.0 1214.8 1034.5)"/><rect x="1214.24" y="1028.9" width="1.12" height="1.92" fill="#3d3d3d" transform="rotate(112.5 1214.8 1034.5)"/><rect x="1214.24" y="1028.9" width="1.12" height="1.92" fill="#3d3d3d" transform="rotate(135.0 1214.8 1034.5)"/><rect x="1214.24" y="1028.9" width="1.12" height="1.92" fill="#3d3d3d" transform="rotate(157.5 1214.8 1034.5)"/><rect x="1214.24" y="1028.9" width="1.12" height="1.92" fill="#3d3d3d" transform="rotate(180.0 1214.8 1034.5)"/><rect x="1214.24" y="1028.9" width="1.12" height="1.92" fill="#3d3d3d" transform="rotate(202.5 1214.8 1034.5)"/><rect x="1214.24" y="1028.9" width="1.12" height="1.92" fill="#3d3d3d" transform="rotate(225.0 1214.8 1034.5)"/><rect x="1214.24" y="1028.9" width="1.12" height="1.92" fill="#3d3d3d" transform="rotate(247.5 1214.8 1034.5)"/><rect x="1214.24" y="1028.9" width="1.12" height="1.92" fill="#3d3d3d" transform="rotate(270.0 1214.8 1034.5)"/><rect x="1214.24" y="1028.9" width="1.12" height="1.92" fill="#3d3d3d" transform="rotate(292.5 1214.8 1034.5)"/><rect x="1214.24" y="1028.9" width="1.12" height="1.92" fill="#3d3d3d" transform="rotate(315.0 1214.8 1034.5)"/><rect x="1214.24" y="1028.9" width="1.12" height="1.92" fill="#3d3d3d" transform="rotate(337.5 1214.8 1034.5)"/><circle cx="1214.8" cy="1034.5" r="2" fill="#fff"/><circle cx="1207.6" cy="1041.6" r="2.59" fill="#3d3d3d"/><rect x="1207.07" y="1038.1" width="1.05" height="1.71" fill="#3d3d3d" transform="rotate(0.0 1207.6 1041.6)"/><rect x="1207.07" y="1038.1" width="1.05" height="1.71" fill="#3d3d3d" transform="rotate(36.0 1207.6 1041.6)"/><rect x="1207.07" y="1038.1" width="1.05" height="1.71" fill="#3d3d3d" transform="rotate(72.0 1207.6 1041.6)"/><rect x="1207.07" y="1038.1" width="1.05" height="1.71" fill="#3d3d3d" transform="rotate(108.0 1207.6 1041.6)"/><rect x="1207.07" y="1038.1" width="1.05" height="1.71" fill="#3d3d3d" transform="rotate(144.0 1207.6 1041.6)"/><rect x="1207.07" y="1038.1" width="1.05" height="1.71" fill="#3d3d3d" transform="rotate(180.0 1207.6 1041.6)"/><rect x="1207.07" y="1038.1" width="1.05" height="1.71" fill="#3d3d3d" transform="rotate(216.0 1207.6 1041.6)"/><rect x="1207.07" y="1038.1" width="1.05" height="1.71" fill="#3d3d3d" transform="rotate(252.0 1207.6 1041.6)"/><rect x="1207.07" y="1038.1" width="1.05" height="1.71" fill="#3d3d3d" transform="rotate(288.0 1207.6 1041.6)"/><rect x="1207.07" y="1038.1" width="1.05" height="1.71" fill="#3d3d3d" transform="rotate(324.0 1207.6 1041.6)"/><circle cx="1207.6" cy="1041.6" r="1.1" fill="#fff"/></svg>
<div class="td" style="left:74px;top:1072.5px">Notifications in Send Queue</div>
<div class="td" style="right:888px;top:1072.5px">13</div>
<div class="td" style="right:765px;top:1072.5px">0 #</div>
<div class="td" style="right:451px;top:1072.5px">0 #</div>
<div class="td" style="right:137px;top:1072.5px">0 #</div>
<div class="rl" style="top:1093px"></div>
<svg class="a" style="left:1200px;top:1067px" width="26" height="22" viewBox="1200 1067 26 22"><circle cx="1214.8" cy="1075.5" r="4.48" fill="#3d3d3d"/><rect x="1214.24" y="1069.9" width="1.12" height="1.92" fill="#3d3d3d" transform="rotate(0.0 1214.8 1075.5)"/><rect x="1214.24" y="1069.9" width="1.12" height="1.92" fill="#3d3d3d" transform="rotate(22.5 1214.8 1075.5)"/><rect x="1214.24" y="1069.9" width="1.12" height="1.92" fill="#3d3d3d" transform="rotate(45.0 1214.8 1075.5)"/><rect x="1214.24" y="1069.9" width="1.12" height="1.92" fill="#3d3d3d" transform="rotate(67.5 1214.8 1075.5)"/><rect x="1214.24" y="1069.9" width="1.12" height="1.92" fill="#3d3d3d" transform="rotate(90.0 1214.8 1075.5)"/><rect x="1214.24" y="1069.9" width="1.12" height="1.92" fill="#3d3d3d" transform="rotate(112.5 1214.8 1075.5)"/><rect x="1214.24" y="1069.9" width="1.12" height="1.92" fill="#3d3d3d" transform="rotate(135.0 1214.8 1075.5)"/><rect x="1214.24" y="1069.9" width="1.12" height="1.92" fill="#3d3d3d" transform="rotate(157.5 1214.8 1075.5)"/><rect x="1214.24" y="1069.9" width="1.12" height="1.92" fill="#3d3d3d" transform="rotate(180.0 1214.8 1075.5)"/><rect x="1214.24" y="1069.9" width="1.12" height="1.92" fill="#3d3d3d" transform="rotate(202.5 1214.8 1075.5)"/><rect x="1214.24" y="1069.9" width="1.12" height="1.92" fill="#3d3d3d" transform="rotate(225.0 1214.8 1075.5)"/><rect x="1214.24" y="1069.9" width="1.12" height="1.92" fill="#3d3d3d" transform="rotate(247.5 1214.8 1075.5)"/><rect x="1214.24" y="1069.9" width="1.12" height="1.92" fill="#3d3d3d" transform="rotate(270.0 1214.8 1075.5)"/><rect x="1214.24" y="1069.9" width="1.12" height="1.92" fill="#3d3d3d" transform="rotate(292.5 1214.8 1075.5)"/><rect x="1214.24" y="1069.9" width="1.12" height="1.92" fill="#3d3d3d" transform="rotate(315.0 1214.8 1075.5)"/><rect x="1214.24" y="1069.9" width="1.12" height="1.92" fill="#3d3d3d" transform="rotate(337.5 1214.8 1075.5)"/><circle cx="1214.8" cy="1075.5" r="2" fill="#fff"/><circle cx="1207.6" cy="1082.6" r="2.59" fill="#3d3d3d"/><rect x="1207.07" y="1079.1" width="1.05" height="1.71" fill="#3d3d3d" transform="rotate(0.0 1207.6 1082.6)"/><rect x="1207.07" y="1079.1" width="1.05" height="1.71" fill="#3d3d3d" transform="rotate(36.0 1207.6 1082.6)"/><rect x="1207.07" y="1079.1" width="1.05" height="1.71" fill="#3d3d3d" transform="rotate(72.0 1207.6 1082.6)"/><rect x="1207.07" y="1079.1" width="1.05" height="1.71" fill="#3d3d3d" transform="rotate(108.0 1207.6 1082.6)"/><rect x="1207.07" y="1079.1" width="1.05" height="1.71" fill="#3d3d3d" transform="rotate(144.0 1207.6 1082.6)"/><rect x="1207.07" y="1079.1" width="1.05" height="1.71" fill="#3d3d3d" transform="rotate(180.0 1207.6 1082.6)"/><rect x="1207.07" y="1079.1" width="1.05" height="1.71" fill="#3d3d3d" transform="rotate(216.0 1207.6 1082.6)"/><rect x="1207.07" y="1079.1" width="1.05" height="1.71" fill="#3d3d3d" transform="rotate(252.0 1207.6 1082.6)"/><rect x="1207.07" y="1079.1" width="1.05" height="1.71" fill="#3d3d3d" transform="rotate(288.0 1207.6 1082.6)"/><rect x="1207.07" y="1079.1" width="1.05" height="1.71" fill="#3d3d3d" transform="rotate(324.0 1207.6 1082.6)"/><circle cx="1207.6" cy="1082.6" r="1.1" fill="#fff"/></svg>
</body></html>
